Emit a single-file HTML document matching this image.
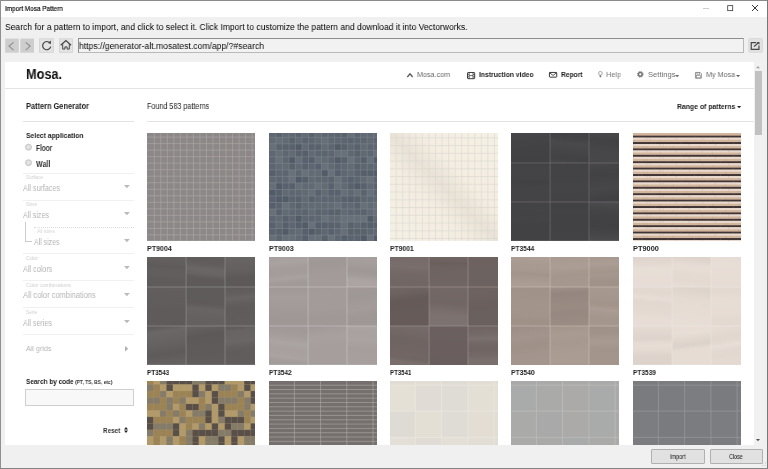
<!DOCTYPE html>
<html><head><meta charset="utf-8"><title>Import Mosa Pattern</title>
<style>
html,body{margin:0;padding:0}
body{width:768px;height:469px;position:relative;overflow:hidden;background:#f0f0f0;font-family:"Liberation Sans",sans-serif}
.a{position:absolute}
.t{position:absolute;white-space:nowrap;line-height:1;transform-origin:0 0;display:block;will-change:transform}
.hr{position:absolute;height:1px;background:#e4e4e4}
.hl{position:absolute;height:1px;background:#f0f0f0}
.btn{position:absolute;box-sizing:border-box;border:1px solid #b0b0b0;border-radius:1px;background:#e1e1e1}
.nb{position:absolute;box-sizing:border-box;width:13.8px;height:14.1px;top:38.5px;border:1px solid #d4d4d4;background:#e3e3e3}
.tri{position:absolute;width:0;height:0;border-left:2.9px solid transparent;border-right:2.9px solid transparent;border-top:3.2px solid #b9b9b9}
.car{position:absolute;width:0;height:0;border-left:1.9px solid transparent;border-right:1.9px solid transparent;border-top:2.2px solid #777}
.tile{position:absolute;width:108px;height:107.9px;overflow:hidden}
svg{position:absolute;overflow:visible}
</style></head><body>
<!-- window frame -->
<div class="a" style="left:0;top:0;width:768px;height:16.5px;background:#fff"></div>
<div class="a" style="left:0;top:0;width:768px;height:1px;background:#8a8a8a"></div>
<div class="a" style="left:0;top:0;width:1px;height:469px;background:#909090"></div>
<div class="a" style="left:767px;top:0;width:1px;height:469px;background:#777"></div>
<div class="a" style="left:0;top:468px;width:768px;height:1px;background:#858585"></div>
<!-- title buttons -->
<div class="a" style="left:703px;top:8px;width:6px;height:1px;background:#cfcfcf"></div>
<svg style="left:727px;top:5px" width="7" height="7" viewBox="0 0 7 7"><rect x=".7" y=".65" width="5" height="5" fill="none" stroke="#3a3a3a" stroke-width=".8"/></svg>
<svg style="left:752px;top:5px" width="6" height="6" viewBox="0 0 6 6"><path d="M0 0L6 6M6 0L0 6" stroke="#222" stroke-width="0.9" fill="none"/></svg>
<!-- nav buttons -->
<svg style="left:0;top:0" width="768" height="60" viewBox="0 0 768 60">
<rect x="5.2" y="38.6" width="13.6" height="14.1" fill="#cecece"/>
<rect x="20.3" y="38.6" width="13.7" height="14.1" fill="#cecece"/>
<rect x="39.6" y="38.8" width="13.7" height="13.5" fill="#e3e3e3" stroke="#d2d2d2" stroke-width=".8"/>
<rect x="59.5" y="38.8" width="13" height="13.5" fill="#e3e3e3" stroke="#d2d2d2" stroke-width=".8"/>
<rect x="748.8" y="38.6" width="13.6" height="13.7" rx="1.2" fill="#e2e2e2" stroke="#d4d4d4" stroke-width=".8"/>
</svg>
<svg style="left:5.17px;top:38.65px" width="14" height="14" viewBox="0 0 14 14"><path d="M8.6 3.3L4 7.1L8.6 11.2" stroke="#8e8e8e" stroke-width="1.1" fill="none"/></svg>
<svg style="left:20.3px;top:38.65px" width="14" height="14" viewBox="0 0 14 14"><path d="M5.7 3.3L10.1 7.1L5.7 11.2" stroke="#8e8e8e" stroke-width="1.1" fill="none"/></svg>
<svg style="left:39.9px;top:38.4px" width="14" height="14" viewBox="0 0 14 14"><path d="M10.72 8.69A4.1 4.1 0 1 1 8.81 4.08" stroke="#444" stroke-width="1.2" fill="none"/><path d="M7.7 4.9L10.86 2.5L11 5.9Z" fill="#444"/></svg>
<svg style="left:59.2px;top:38.4px" width="14" height="14" viewBox="0 0 14 14"><path d="M1.7 7.3L6.9 2.6L12.1 7.3" stroke="#444" stroke-width="1.3" fill="none"/><path d="M3.7 6.3V11.1H5.9V8.9H8.1V11.1H10.3V6.3" stroke="#444" stroke-width="1" fill="none"/></svg>
<!-- url field -->
<div class="a" style="left:77.5px;top:38.2px;width:666.2px;height:15px;box-sizing:border-box;border:1px solid #b9b9b9;border-top-color:#8e8e8e;border-left-color:#8e8e8e;background:#f2f2f2"></div>
<svg style="left:748.4px;top:38.2px" width="14.3" height="14.4" viewBox="0 0 14.3 14.4"><path d="M8.2 4.55H3.25V11.45H10.95V7.6" stroke="#484848" stroke-width="1.2" fill="none"/><path d="M6 8.5L10.8 4.5" stroke="#484848" stroke-width="1.1" fill="none"/><path d="M8.6 3.9H11.5V6.8Z" fill="#484848"/></svg>
<!-- web view -->
<div class="a" style="left:5px;top:62px;width:758px;height:383px;background:#fff;overflow:hidden"></div>
<!-- scrollbar -->
<div class="a" style="left:754px;top:62px;width:9px;height:383px;background:#f1f1f1"></div>
<div class="a" style="left:755.3px;top:71px;width:6.4px;height:63.5px;background:#c1c1c1"></div>
<svg style="left:756.4px;top:65.6px" width="4" height="2.2" viewBox="0 0 4 2.2"><path d="M0 2.2H4L2 0Z" fill="#a3a3a3"/></svg>
<svg style="left:756.4px;top:439.4px" width="4" height="2.2" viewBox="0 0 4 2.2"><path d="M0 0H4L2 2.2Z" fill="#505050"/></svg>
<!-- page lines -->
<div class="hr" style="left:5px;top:88.2px;width:749px"></div>
<div class="hr" style="left:23px;top:120.9px;width:110.5px"></div>
<div class="hr" style="left:147px;top:120.9px;width:607px"></div>
<div class="hl" style="left:23px;top:173.2px;width:110.5px"></div>
<div class="hl" style="left:23px;top:200.2px;width:110.5px"></div>
<div class="a" style="left:34px;top:226.7px;width:99.5px;height:0;border-top:1px dotted #dcdcdc"></div>
<div class="hl" style="left:23px;top:253.2px;width:110.5px"></div>
<div class="hl" style="left:23px;top:280.3px;width:110.5px"></div>
<div class="hl" style="left:23px;top:307.1px;width:110.5px"></div>
<div class="hl" style="left:23px;top:334.1px;width:110.5px"></div>
<!-- radios -->
<svg style="left:24px;top:142px" width="10" height="26" viewBox="0 0 10 26"><defs><radialGradient id="rg" cx=".5" cy=".45" r=".6"><stop offset="0" stop-color="#e9e9e9"/><stop offset="1" stop-color="#d6d6d6"/></radialGradient></defs><circle cx="4.5" cy="5.2" r="3" fill="url(#rg)" stroke="#b9b9b9" stroke-width=".7"/><circle cx="4.5" cy="20.7" r="3" fill="url(#rg)" stroke="#b9b9b9" stroke-width=".7"/></svg>
<!-- dropdown triangles -->
<svg style="left:123.9px;top:185.2px" width="5.8" height="3.2" viewBox="0 0 5.8 3.2"><path d="M0 0H5.8L2.9 3.2Z" fill="#b9b9b9"/></svg>
<svg style="left:123.9px;top:212.0px" width="5.8" height="3.2" viewBox="0 0 5.8 3.2"><path d="M0 0H5.8L2.9 3.2Z" fill="#b9b9b9"/></svg>
<svg style="left:123.9px;top:239.0px" width="5.8" height="3.2" viewBox="0 0 5.8 3.2"><path d="M0 0H5.8L2.9 3.2Z" fill="#b9b9b9"/></svg>
<svg style="left:123.9px;top:265.8px" width="5.8" height="3.2" viewBox="0 0 5.8 3.2"><path d="M0 0H5.8L2.9 3.2Z" fill="#b9b9b9"/></svg>
<svg style="left:123.9px;top:292.6px" width="5.8" height="3.2" viewBox="0 0 5.8 3.2"><path d="M0 0H5.8L2.9 3.2Z" fill="#b9b9b9"/></svg>
<svg style="left:123.9px;top:319.5px" width="5.8" height="3.2" viewBox="0 0 5.8 3.2"><path d="M0 0H5.8L2.9 3.2Z" fill="#b9b9b9"/></svg>
<svg style="left:125px;top:345.7px" width="3.3" height="5.4" viewBox="0 0 3.3 5.4"><path d="M0 0L3.3 2.7L0 5.4Z" fill="#b0b0b0"/></svg>
<!-- size connector -->
<div class="a" style="left:25.2px;top:222.3px;width:6.8px;height:19.7px;box-sizing:border-box;border-left:1px solid #cbcbcb;border-bottom:1px solid #cbcbcb"></div>
<!-- search input -->
<div class="a" style="left:25px;top:388.6px;width:108.8px;height:17px;box-sizing:border-box;border:1px solid #cfcfcf;background:#f8f8f8"></div>
<!-- reset icon -->
<svg style="left:124px;top:427.4px" width="4" height="6" viewBox="0 0 4 6"><path d="M0 2.5L2 0L4 2.5ZM0 3.5L2 6L4 3.5Z" fill="#222"/></svg>
<!-- header icons -->
<svg style="left:407.2px;top:73px" width="6" height="4.4" viewBox="0 0 6 4.4"><path d="M0.3 4L3 0.9L5.7 4" stroke="#5a5a5a" stroke-width="1.35" fill="none"/></svg>
<svg style="left:466.6px;top:71.5px" width="8.2" height="7.2" viewBox="0 0 8.2 7.2"><rect x=".5" y=".5" width="7.2" height="6.2" rx=".6" fill="none" stroke="#2a2a2a" stroke-width=".9"/><path d="M2.2 .5V6.7M6 .5V6.7M2.2 3.6H6M.5 2.4H2.2M.5 4.8H2.2M6 2.4H7.7M6 4.8H7.7" stroke="#2a2a2a" stroke-width=".65" fill="none"/></svg>
<svg style="left:549px;top:72.4px" width="8.2" height="5.6" viewBox="0 0 8.2 5.6"><rect x=".45" y=".45" width="7.3" height="4.7" rx=".5" fill="none" stroke="#222" stroke-width=".9"/><path d="M.6 .8L4.1 3.4L7.6 .8" stroke="#222" stroke-width=".8" fill="none"/></svg>
<svg style="left:598.3px;top:71.1px" width="4.8" height="6.8" viewBox="0 0 4.8 6.8"><circle cx="2.4" cy="2.3" r="1.85" fill="none" stroke="#8a8a8a" stroke-width=".75"/><path d="M1.6 4.3H3.2V5.9L2.4 6.5L1.6 5.9Z" fill="#777"/></svg>
<svg style="left:637.4px;top:71.1px" width="6.6" height="6.6" viewBox="0 0 6.6 6.6"><circle cx="3.3" cy="3.3" r="1.9" fill="none" stroke="#747474" stroke-width="1.5"/><circle cx="3.3" cy="3.3" r="2.9" fill="none" stroke="#747474" stroke-width=".9" stroke-dasharray="1.14 1.14"/></svg>
<svg style="left:695.2px;top:71.6px" width="6.8" height="6.6" viewBox="0 0 6.8 6.6"><path d="M.45 .45H5.2L6.35 1.6V6.15H.45Z" fill="none" stroke="#7a7a7a" stroke-width=".8"/><path d="M1.9 .5V2.3H4.6V.5" fill="none" stroke="#7a7a7a" stroke-width=".7"/><rect x="1.6" y="3.7" width="3.6" height="2.3" fill="none" stroke="#7a7a7a" stroke-width=".6"/></svg>
<svg style="left:675px;top:74.6px" width="4.2" height="2.3" viewBox="0 0 4.2 2.3"><path d="M0 0H4.2L2.1 2.3Z" fill="#6a6a6a"/></svg>
<svg style="left:736.2px;top:74.6px" width="4.2" height="2.3" viewBox="0 0 4.2 2.3"><path d="M0 0H4.2L2.1 2.3Z" fill="#6a6a6a"/></svg>
<svg style="left:736.8px;top:105.6px" width="4.2" height="2.3" viewBox="0 0 4.2 2.3"><path d="M0 0H4.2L2.1 2.3Z" fill="#222"/></svg>
<!-- bottom buttons -->
<div class="btn" style="left:651.3px;top:449.3px;width:53.4px;height:14.4px"></div>
<div class="btn" style="left:709.7px;top:449.3px;width:53.3px;height:14.4px"></div>
<!-- resize grip -->
<svg style="left:761.3px;top:461.2px" width="5.6" height="5.6" viewBox="0 0 7 7"><g fill="#c4c4c4"><rect x="5" y="1" width="1" height="1"/><rect x="5" y="3" width="1" height="1"/><rect x="3" y="3" width="1" height="1"/><rect x="5" y="5" width="1" height="1"/><rect x="3" y="5" width="1" height="1"/><rect x="1" y="5" width="1" height="1"/></g></svg>
<div class="a" style="left:5px;top:62px;width:749px;height:383px;overflow:hidden"><div class="tile" style="left:142.2px;top:71.0px"><svg width="108" height="107.9" viewBox="0 0 108 107.9" style="left:0;top:0"><rect width="108" height="107.9" fill="#8c8887"/><path d="M7.30 0V107.9M13.82 0V107.9M20.34 0V107.9M26.86 0V107.9M33.38 0V107.9M39.90 0V107.9M46.42 0V107.9M52.94 0V107.9M59.46 0V107.9M65.98 0V107.9M72.50 0V107.9M79.02 0V107.9M85.54 0V107.9M92.06 0V107.9M98.58 0V107.9M105.10 0V107.9M0 4.10H108M0 10.62H108M0 17.14H108M0 23.66H108M0 30.18H108M0 36.70H108M0 43.22H108M0 49.74H108M0 56.26H108M0 62.78H108M0 69.30H108M0 75.82H108M0 82.34H108M0 88.86H108M0 95.38H108M0 101.90H108" stroke="#b4b0af" stroke-width="0.5" fill="none" opacity="1"/></svg></div><div class="tile" style="left:263.6px;top:71.0px"><svg width="108" height="107.9" viewBox="0 0 108 107.9" style="left:0;top:0"><rect width="108" height="107.9" fill="#5d6670"/><rect x="0.38" y="-2.22" width="6.52" height="6.52" fill="#5e6771"/><rect x="6.90" y="-2.22" width="6.52" height="6.52" fill="#58616d"/><rect x="13.42" y="-2.22" width="6.52" height="6.52" fill="#616973"/><rect x="19.94" y="-2.22" width="6.52" height="6.52" fill="#5f6872"/><rect x="26.46" y="-2.22" width="6.52" height="6.52" fill="#5a636e"/><rect x="32.98" y="-2.22" width="6.52" height="6.52" fill="#626a74"/><rect x="39.50" y="-2.22" width="6.52" height="6.52" fill="#59616b"/><rect x="46.02" y="-2.22" width="6.52" height="6.52" fill="#626a74"/><rect x="52.54" y="-2.22" width="6.52" height="6.52" fill="#5e6771"/><rect x="59.06" y="-2.22" width="6.52" height="6.52" fill="#5d6670"/><rect x="65.58" y="-2.22" width="6.52" height="6.52" fill="#5a636e"/><rect x="72.10" y="-2.22" width="6.52" height="6.52" fill="#59616b"/><rect x="78.62" y="-2.22" width="6.52" height="6.52" fill="#666e77"/><rect x="85.14" y="-2.22" width="6.52" height="6.52" fill="#5a636e"/><rect x="91.66" y="-2.22" width="6.52" height="6.52" fill="#626a74"/><rect x="98.18" y="-2.22" width="6.52" height="6.52" fill="#616973"/><rect x="104.70" y="-2.22" width="6.52" height="6.52" fill="#616973"/><rect x="0.38" y="4.30" width="6.52" height="6.52" fill="#626a74"/><rect x="6.90" y="4.30" width="6.52" height="6.52" fill="#666e77"/><rect x="13.42" y="4.30" width="6.52" height="6.52" fill="#626a74"/><rect x="19.94" y="4.30" width="6.52" height="6.52" fill="#59616b"/><rect x="26.46" y="4.30" width="6.52" height="6.52" fill="#616973"/><rect x="32.98" y="4.30" width="6.52" height="6.52" fill="#5a636e"/><rect x="39.50" y="4.30" width="6.52" height="6.52" fill="#5d6670"/><rect x="46.02" y="4.30" width="6.52" height="6.52" fill="#626a74"/><rect x="52.54" y="4.30" width="6.52" height="6.52" fill="#666e77"/><rect x="59.06" y="4.30" width="6.52" height="6.52" fill="#5f6872"/><rect x="65.58" y="4.30" width="6.52" height="6.52" fill="#5f6872"/><rect x="72.10" y="4.30" width="6.52" height="6.52" fill="#5d6670"/><rect x="78.62" y="4.30" width="6.52" height="6.52" fill="#5a636e"/><rect x="85.14" y="4.30" width="6.52" height="6.52" fill="#5d6670"/><rect x="91.66" y="4.30" width="6.52" height="6.52" fill="#5d6670"/><rect x="98.18" y="4.30" width="6.52" height="6.52" fill="#616973"/><rect x="104.70" y="4.30" width="6.52" height="6.52" fill="#5a636e"/><rect x="0.38" y="10.82" width="6.52" height="6.52" fill="#666e77"/><rect x="6.90" y="10.82" width="6.52" height="6.52" fill="#5a636e"/><rect x="13.42" y="10.82" width="6.52" height="6.52" fill="#59616b"/><rect x="19.94" y="10.82" width="6.52" height="6.52" fill="#58616d"/><rect x="26.46" y="10.82" width="6.52" height="6.52" fill="#525b68"/><rect x="32.98" y="10.82" width="6.52" height="6.52" fill="#616973"/><rect x="39.50" y="10.82" width="6.52" height="6.52" fill="#58616d"/><rect x="46.02" y="10.82" width="6.52" height="6.52" fill="#59616b"/><rect x="52.54" y="10.82" width="6.52" height="6.52" fill="#626a74"/><rect x="59.06" y="10.82" width="6.52" height="6.52" fill="#5d6670"/><rect x="65.58" y="10.82" width="6.52" height="6.52" fill="#525b68"/><rect x="72.10" y="10.82" width="6.52" height="6.52" fill="#59616b"/><rect x="78.62" y="10.82" width="6.52" height="6.52" fill="#5f6872"/><rect x="85.14" y="10.82" width="6.52" height="6.52" fill="#58616d"/><rect x="91.66" y="10.82" width="6.52" height="6.52" fill="#626a74"/><rect x="98.18" y="10.82" width="6.52" height="6.52" fill="#5d6670"/><rect x="104.70" y="10.82" width="6.52" height="6.52" fill="#5d6670"/><rect x="0.38" y="17.34" width="6.52" height="6.52" fill="#5f6872"/><rect x="6.90" y="17.34" width="6.52" height="6.52" fill="#666e77"/><rect x="13.42" y="17.34" width="6.52" height="6.52" fill="#5e6771"/><rect x="19.94" y="17.34" width="6.52" height="6.52" fill="#626a74"/><rect x="26.46" y="17.34" width="6.52" height="6.52" fill="#59616b"/><rect x="32.98" y="17.34" width="6.52" height="6.52" fill="#565f6c"/><rect x="39.50" y="17.34" width="6.52" height="6.52" fill="#626a74"/><rect x="46.02" y="17.34" width="6.52" height="6.52" fill="#5d6670"/><rect x="52.54" y="17.34" width="6.52" height="6.52" fill="#5a636e"/><rect x="59.06" y="17.34" width="6.52" height="6.52" fill="#5d6670"/><rect x="65.58" y="17.34" width="6.52" height="6.52" fill="#666e77"/><rect x="72.10" y="17.34" width="6.52" height="6.52" fill="#687079"/><rect x="78.62" y="17.34" width="6.52" height="6.52" fill="#5f6872"/><rect x="85.14" y="17.34" width="6.52" height="6.52" fill="#59616b"/><rect x="91.66" y="17.34" width="6.52" height="6.52" fill="#616973"/><rect x="98.18" y="17.34" width="6.52" height="6.52" fill="#5e6771"/><rect x="104.70" y="17.34" width="6.52" height="6.52" fill="#687079"/><rect x="0.38" y="23.86" width="6.52" height="6.52" fill="#5d6670"/><rect x="6.90" y="23.86" width="6.52" height="6.52" fill="#687079"/><rect x="13.42" y="23.86" width="6.52" height="6.52" fill="#5e6771"/><rect x="19.94" y="23.86" width="6.52" height="6.52" fill="#525b68"/><rect x="26.46" y="23.86" width="6.52" height="6.52" fill="#666e77"/><rect x="32.98" y="23.86" width="6.52" height="6.52" fill="#58616d"/><rect x="39.50" y="23.86" width="6.52" height="6.52" fill="#565f6c"/><rect x="46.02" y="23.86" width="6.52" height="6.52" fill="#666e77"/><rect x="52.54" y="23.86" width="6.52" height="6.52" fill="#626a74"/><rect x="59.06" y="23.86" width="6.52" height="6.52" fill="#5d6670"/><rect x="65.58" y="23.86" width="6.52" height="6.52" fill="#525b68"/><rect x="72.10" y="23.86" width="6.52" height="6.52" fill="#59616b"/><rect x="78.62" y="23.86" width="6.52" height="6.52" fill="#687079"/><rect x="85.14" y="23.86" width="6.52" height="6.52" fill="#5e6771"/><rect x="91.66" y="23.86" width="6.52" height="6.52" fill="#565f6c"/><rect x="98.18" y="23.86" width="6.52" height="6.52" fill="#687079"/><rect x="104.70" y="23.86" width="6.52" height="6.52" fill="#525b68"/><rect x="0.38" y="30.38" width="6.52" height="6.52" fill="#5d6670"/><rect x="6.90" y="30.38" width="6.52" height="6.52" fill="#626a74"/><rect x="13.42" y="30.38" width="6.52" height="6.52" fill="#626a74"/><rect x="19.94" y="30.38" width="6.52" height="6.52" fill="#59616b"/><rect x="26.46" y="30.38" width="6.52" height="6.52" fill="#616973"/><rect x="32.98" y="30.38" width="6.52" height="6.52" fill="#58616d"/><rect x="39.50" y="30.38" width="6.52" height="6.52" fill="#5e6771"/><rect x="46.02" y="30.38" width="6.52" height="6.52" fill="#58616d"/><rect x="52.54" y="30.38" width="6.52" height="6.52" fill="#687079"/><rect x="59.06" y="30.38" width="6.52" height="6.52" fill="#616973"/><rect x="65.58" y="30.38" width="6.52" height="6.52" fill="#5a636e"/><rect x="72.10" y="30.38" width="6.52" height="6.52" fill="#5f6872"/><rect x="78.62" y="30.38" width="6.52" height="6.52" fill="#626a74"/><rect x="85.14" y="30.38" width="6.52" height="6.52" fill="#59616b"/><rect x="91.66" y="30.38" width="6.52" height="6.52" fill="#5d6670"/><rect x="98.18" y="30.38" width="6.52" height="6.52" fill="#5e6771"/><rect x="104.70" y="30.38" width="6.52" height="6.52" fill="#5e6771"/><rect x="0.38" y="36.90" width="6.52" height="6.52" fill="#565f6c"/><rect x="6.90" y="36.90" width="6.52" height="6.52" fill="#5e6771"/><rect x="13.42" y="36.90" width="6.52" height="6.52" fill="#5d6670"/><rect x="19.94" y="36.90" width="6.52" height="6.52" fill="#687079"/><rect x="26.46" y="36.90" width="6.52" height="6.52" fill="#5d6670"/><rect x="32.98" y="36.90" width="6.52" height="6.52" fill="#687079"/><rect x="39.50" y="36.90" width="6.52" height="6.52" fill="#626a74"/><rect x="46.02" y="36.90" width="6.52" height="6.52" fill="#626a74"/><rect x="52.54" y="36.90" width="6.52" height="6.52" fill="#525b68"/><rect x="59.06" y="36.90" width="6.52" height="6.52" fill="#687079"/><rect x="65.58" y="36.90" width="6.52" height="6.52" fill="#565f6c"/><rect x="72.10" y="36.90" width="6.52" height="6.52" fill="#5f6872"/><rect x="78.62" y="36.90" width="6.52" height="6.52" fill="#626a74"/><rect x="85.14" y="36.90" width="6.52" height="6.52" fill="#5a636e"/><rect x="91.66" y="36.90" width="6.52" height="6.52" fill="#565f6c"/><rect x="98.18" y="36.90" width="6.52" height="6.52" fill="#565f6c"/><rect x="104.70" y="36.90" width="6.52" height="6.52" fill="#525b68"/><rect x="0.38" y="43.42" width="6.52" height="6.52" fill="#5f6872"/><rect x="6.90" y="43.42" width="6.52" height="6.52" fill="#5d6670"/><rect x="13.42" y="43.42" width="6.52" height="6.52" fill="#5f6872"/><rect x="19.94" y="43.42" width="6.52" height="6.52" fill="#687079"/><rect x="26.46" y="43.42" width="6.52" height="6.52" fill="#525b68"/><rect x="32.98" y="43.42" width="6.52" height="6.52" fill="#565f6c"/><rect x="39.50" y="43.42" width="6.52" height="6.52" fill="#616973"/><rect x="46.02" y="43.42" width="6.52" height="6.52" fill="#5f6872"/><rect x="52.54" y="43.42" width="6.52" height="6.52" fill="#5e6771"/><rect x="59.06" y="43.42" width="6.52" height="6.52" fill="#5a636e"/><rect x="65.58" y="43.42" width="6.52" height="6.52" fill="#687079"/><rect x="72.10" y="43.42" width="6.52" height="6.52" fill="#5e6771"/><rect x="78.62" y="43.42" width="6.52" height="6.52" fill="#58616d"/><rect x="85.14" y="43.42" width="6.52" height="6.52" fill="#5d6670"/><rect x="91.66" y="43.42" width="6.52" height="6.52" fill="#626a74"/><rect x="98.18" y="43.42" width="6.52" height="6.52" fill="#687079"/><rect x="104.70" y="43.42" width="6.52" height="6.52" fill="#5a636e"/><rect x="0.38" y="49.94" width="6.52" height="6.52" fill="#666e77"/><rect x="6.90" y="49.94" width="6.52" height="6.52" fill="#525b68"/><rect x="13.42" y="49.94" width="6.52" height="6.52" fill="#58616d"/><rect x="19.94" y="49.94" width="6.52" height="6.52" fill="#565f6c"/><rect x="26.46" y="49.94" width="6.52" height="6.52" fill="#666e77"/><rect x="32.98" y="49.94" width="6.52" height="6.52" fill="#616973"/><rect x="39.50" y="49.94" width="6.52" height="6.52" fill="#616973"/><rect x="46.02" y="49.94" width="6.52" height="6.52" fill="#687079"/><rect x="52.54" y="49.94" width="6.52" height="6.52" fill="#626a74"/><rect x="59.06" y="49.94" width="6.52" height="6.52" fill="#58616d"/><rect x="65.58" y="49.94" width="6.52" height="6.52" fill="#687079"/><rect x="72.10" y="49.94" width="6.52" height="6.52" fill="#616973"/><rect x="78.62" y="49.94" width="6.52" height="6.52" fill="#59616b"/><rect x="85.14" y="49.94" width="6.52" height="6.52" fill="#525b68"/><rect x="91.66" y="49.94" width="6.52" height="6.52" fill="#58616d"/><rect x="98.18" y="49.94" width="6.52" height="6.52" fill="#616973"/><rect x="104.70" y="49.94" width="6.52" height="6.52" fill="#59616b"/><rect x="0.38" y="56.46" width="6.52" height="6.52" fill="#525b68"/><rect x="6.90" y="56.46" width="6.52" height="6.52" fill="#565f6c"/><rect x="13.42" y="56.46" width="6.52" height="6.52" fill="#616973"/><rect x="19.94" y="56.46" width="6.52" height="6.52" fill="#5e6771"/><rect x="26.46" y="56.46" width="6.52" height="6.52" fill="#5f6872"/><rect x="32.98" y="56.46" width="6.52" height="6.52" fill="#616973"/><rect x="39.50" y="56.46" width="6.52" height="6.52" fill="#666e77"/><rect x="46.02" y="56.46" width="6.52" height="6.52" fill="#58616d"/><rect x="52.54" y="56.46" width="6.52" height="6.52" fill="#626a74"/><rect x="59.06" y="56.46" width="6.52" height="6.52" fill="#58616d"/><rect x="65.58" y="56.46" width="6.52" height="6.52" fill="#58616d"/><rect x="72.10" y="56.46" width="6.52" height="6.52" fill="#666e77"/><rect x="78.62" y="56.46" width="6.52" height="6.52" fill="#5f6872"/><rect x="85.14" y="56.46" width="6.52" height="6.52" fill="#666e77"/><rect x="91.66" y="56.46" width="6.52" height="6.52" fill="#5a636e"/><rect x="98.18" y="56.46" width="6.52" height="6.52" fill="#687079"/><rect x="104.70" y="56.46" width="6.52" height="6.52" fill="#5d6670"/><rect x="0.38" y="62.98" width="6.52" height="6.52" fill="#58616d"/><rect x="6.90" y="62.98" width="6.52" height="6.52" fill="#525b68"/><rect x="13.42" y="62.98" width="6.52" height="6.52" fill="#525b68"/><rect x="19.94" y="62.98" width="6.52" height="6.52" fill="#5a636e"/><rect x="26.46" y="62.98" width="6.52" height="6.52" fill="#58616d"/><rect x="32.98" y="62.98" width="6.52" height="6.52" fill="#616973"/><rect x="39.50" y="62.98" width="6.52" height="6.52" fill="#59616b"/><rect x="46.02" y="62.98" width="6.52" height="6.52" fill="#5e6771"/><rect x="52.54" y="62.98" width="6.52" height="6.52" fill="#5d6670"/><rect x="59.06" y="62.98" width="6.52" height="6.52" fill="#5d6670"/><rect x="65.58" y="62.98" width="6.52" height="6.52" fill="#5e6771"/><rect x="72.10" y="62.98" width="6.52" height="6.52" fill="#58616d"/><rect x="78.62" y="62.98" width="6.52" height="6.52" fill="#565f6c"/><rect x="85.14" y="62.98" width="6.52" height="6.52" fill="#59616b"/><rect x="91.66" y="62.98" width="6.52" height="6.52" fill="#5d6670"/><rect x="98.18" y="62.98" width="6.52" height="6.52" fill="#5f6872"/><rect x="104.70" y="62.98" width="6.52" height="6.52" fill="#5f6872"/><rect x="0.38" y="69.50" width="6.52" height="6.52" fill="#565f6c"/><rect x="6.90" y="69.50" width="6.52" height="6.52" fill="#5a636e"/><rect x="13.42" y="69.50" width="6.52" height="6.52" fill="#687079"/><rect x="19.94" y="69.50" width="6.52" height="6.52" fill="#5f6872"/><rect x="26.46" y="69.50" width="6.52" height="6.52" fill="#59616b"/><rect x="32.98" y="69.50" width="6.52" height="6.52" fill="#616973"/><rect x="39.50" y="69.50" width="6.52" height="6.52" fill="#616973"/><rect x="46.02" y="69.50" width="6.52" height="6.52" fill="#616973"/><rect x="52.54" y="69.50" width="6.52" height="6.52" fill="#616973"/><rect x="59.06" y="69.50" width="6.52" height="6.52" fill="#626a74"/><rect x="65.58" y="69.50" width="6.52" height="6.52" fill="#687079"/><rect x="72.10" y="69.50" width="6.52" height="6.52" fill="#5f6872"/><rect x="78.62" y="69.50" width="6.52" height="6.52" fill="#616973"/><rect x="85.14" y="69.50" width="6.52" height="6.52" fill="#5a636e"/><rect x="91.66" y="69.50" width="6.52" height="6.52" fill="#666e77"/><rect x="98.18" y="69.50" width="6.52" height="6.52" fill="#626a74"/><rect x="104.70" y="69.50" width="6.52" height="6.52" fill="#666e77"/><rect x="0.38" y="76.02" width="6.52" height="6.52" fill="#687079"/><rect x="6.90" y="76.02" width="6.52" height="6.52" fill="#58616d"/><rect x="13.42" y="76.02" width="6.52" height="6.52" fill="#626a74"/><rect x="19.94" y="76.02" width="6.52" height="6.52" fill="#5e6771"/><rect x="26.46" y="76.02" width="6.52" height="6.52" fill="#5d6670"/><rect x="32.98" y="76.02" width="6.52" height="6.52" fill="#5a636e"/><rect x="39.50" y="76.02" width="6.52" height="6.52" fill="#626a74"/><rect x="46.02" y="76.02" width="6.52" height="6.52" fill="#5a636e"/><rect x="52.54" y="76.02" width="6.52" height="6.52" fill="#5d6670"/><rect x="59.06" y="76.02" width="6.52" height="6.52" fill="#58616d"/><rect x="65.58" y="76.02" width="6.52" height="6.52" fill="#59616b"/><rect x="72.10" y="76.02" width="6.52" height="6.52" fill="#626a74"/><rect x="78.62" y="76.02" width="6.52" height="6.52" fill="#5e6771"/><rect x="85.14" y="76.02" width="6.52" height="6.52" fill="#5d6670"/><rect x="91.66" y="76.02" width="6.52" height="6.52" fill="#5a636e"/><rect x="98.18" y="76.02" width="6.52" height="6.52" fill="#626a74"/><rect x="104.70" y="76.02" width="6.52" height="6.52" fill="#666e77"/><rect x="0.38" y="82.54" width="6.52" height="6.52" fill="#5d6670"/><rect x="6.90" y="82.54" width="6.52" height="6.52" fill="#616973"/><rect x="13.42" y="82.54" width="6.52" height="6.52" fill="#58616d"/><rect x="19.94" y="82.54" width="6.52" height="6.52" fill="#5f6872"/><rect x="26.46" y="82.54" width="6.52" height="6.52" fill="#525b68"/><rect x="32.98" y="82.54" width="6.52" height="6.52" fill="#5e6771"/><rect x="39.50" y="82.54" width="6.52" height="6.52" fill="#5d6670"/><rect x="46.02" y="82.54" width="6.52" height="6.52" fill="#5e6771"/><rect x="52.54" y="82.54" width="6.52" height="6.52" fill="#687079"/><rect x="59.06" y="82.54" width="6.52" height="6.52" fill="#626a74"/><rect x="65.58" y="82.54" width="6.52" height="6.52" fill="#626a74"/><rect x="72.10" y="82.54" width="6.52" height="6.52" fill="#687079"/><rect x="78.62" y="82.54" width="6.52" height="6.52" fill="#687079"/><rect x="85.14" y="82.54" width="6.52" height="6.52" fill="#687079"/><rect x="91.66" y="82.54" width="6.52" height="6.52" fill="#687079"/><rect x="98.18" y="82.54" width="6.52" height="6.52" fill="#525b68"/><rect x="104.70" y="82.54" width="6.52" height="6.52" fill="#626a74"/><rect x="0.38" y="89.06" width="6.52" height="6.52" fill="#58616d"/><rect x="6.90" y="89.06" width="6.52" height="6.52" fill="#626a74"/><rect x="13.42" y="89.06" width="6.52" height="6.52" fill="#565f6c"/><rect x="19.94" y="89.06" width="6.52" height="6.52" fill="#5e6771"/><rect x="26.46" y="89.06" width="6.52" height="6.52" fill="#565f6c"/><rect x="32.98" y="89.06" width="6.52" height="6.52" fill="#525b68"/><rect x="39.50" y="89.06" width="6.52" height="6.52" fill="#687079"/><rect x="46.02" y="89.06" width="6.52" height="6.52" fill="#565f6c"/><rect x="52.54" y="89.06" width="6.52" height="6.52" fill="#58616d"/><rect x="59.06" y="89.06" width="6.52" height="6.52" fill="#59616b"/><rect x="65.58" y="89.06" width="6.52" height="6.52" fill="#5a636e"/><rect x="72.10" y="89.06" width="6.52" height="6.52" fill="#666e77"/><rect x="78.62" y="89.06" width="6.52" height="6.52" fill="#59616b"/><rect x="85.14" y="89.06" width="6.52" height="6.52" fill="#5e6771"/><rect x="91.66" y="89.06" width="6.52" height="6.52" fill="#58616d"/><rect x="98.18" y="89.06" width="6.52" height="6.52" fill="#565f6c"/><rect x="104.70" y="89.06" width="6.52" height="6.52" fill="#59616b"/><rect x="0.38" y="95.58" width="6.52" height="6.52" fill="#5a636e"/><rect x="6.90" y="95.58" width="6.52" height="6.52" fill="#59616b"/><rect x="13.42" y="95.58" width="6.52" height="6.52" fill="#525b68"/><rect x="19.94" y="95.58" width="6.52" height="6.52" fill="#5f6872"/><rect x="26.46" y="95.58" width="6.52" height="6.52" fill="#626a74"/><rect x="32.98" y="95.58" width="6.52" height="6.52" fill="#565f6c"/><rect x="39.50" y="95.58" width="6.52" height="6.52" fill="#525b68"/><rect x="46.02" y="95.58" width="6.52" height="6.52" fill="#59616b"/><rect x="52.54" y="95.58" width="6.52" height="6.52" fill="#5e6771"/><rect x="59.06" y="95.58" width="6.52" height="6.52" fill="#58616d"/><rect x="65.58" y="95.58" width="6.52" height="6.52" fill="#5e6771"/><rect x="72.10" y="95.58" width="6.52" height="6.52" fill="#666e77"/><rect x="78.62" y="95.58" width="6.52" height="6.52" fill="#59616b"/><rect x="85.14" y="95.58" width="6.52" height="6.52" fill="#59616b"/><rect x="91.66" y="95.58" width="6.52" height="6.52" fill="#59616b"/><rect x="98.18" y="95.58" width="6.52" height="6.52" fill="#5e6771"/><rect x="104.70" y="95.58" width="6.52" height="6.52" fill="#5f6872"/><rect x="0.38" y="102.10" width="6.52" height="6.52" fill="#666e77"/><rect x="6.90" y="102.10" width="6.52" height="6.52" fill="#5d6670"/><rect x="13.42" y="102.10" width="6.52" height="6.52" fill="#666e77"/><rect x="19.94" y="102.10" width="6.52" height="6.52" fill="#666e77"/><rect x="26.46" y="102.10" width="6.52" height="6.52" fill="#616973"/><rect x="32.98" y="102.10" width="6.52" height="6.52" fill="#565f6c"/><rect x="39.50" y="102.10" width="6.52" height="6.52" fill="#666e77"/><rect x="46.02" y="102.10" width="6.52" height="6.52" fill="#666e77"/><rect x="52.54" y="102.10" width="6.52" height="6.52" fill="#59616b"/><rect x="59.06" y="102.10" width="6.52" height="6.52" fill="#687079"/><rect x="65.58" y="102.10" width="6.52" height="6.52" fill="#5e6771"/><rect x="72.10" y="102.10" width="6.52" height="6.52" fill="#565f6c"/><rect x="78.62" y="102.10" width="6.52" height="6.52" fill="#5a636e"/><rect x="85.14" y="102.10" width="6.52" height="6.52" fill="#5a636e"/><rect x="91.66" y="102.10" width="6.52" height="6.52" fill="#525b68"/><rect x="98.18" y="102.10" width="6.52" height="6.52" fill="#687079"/><rect x="104.70" y="102.10" width="6.52" height="6.52" fill="#525b68"/><path d="M6.90 0V107.9M13.42 0V107.9M19.94 0V107.9M26.46 0V107.9M32.98 0V107.9M39.50 0V107.9M46.02 0V107.9M52.54 0V107.9M59.06 0V107.9M65.58 0V107.9M72.10 0V107.9M78.62 0V107.9M85.14 0V107.9M91.66 0V107.9M98.18 0V107.9M104.70 0V107.9M0 4.30H108M0 10.82H108M0 17.34H108M0 23.86H108M0 30.38H108M0 36.90H108M0 43.42H108M0 49.94H108M0 56.46H108M0 62.98H108M0 69.50H108M0 76.02H108M0 82.54H108M0 89.06H108M0 95.58H108M0 102.10H108" stroke="#838a93" stroke-width="0.55" fill="none" opacity="0.9"/></svg></div><div class="tile" style="left:385.0px;top:71.0px"><svg width="108" height="107.9" viewBox="0 0 108 107.9" style="left:0;top:0"><defs><linearGradient id="g1" x1="1" y1="0" x2="0" y2="1"><stop offset="0" stop-color="#f5f0e4"/><stop offset=".36" stop-color="#f4eee2"/><stop offset=".5" stop-color="#e9e3d7"/><stop offset=".64" stop-color="#f3ede1"/><stop offset="1" stop-color="#f5f0e4"/></linearGradient></defs><rect width="108" height="107.9" fill="url(#g1)"/><path d="M6.20 0V107.9M12.75 0V107.9M19.30 0V107.9M25.85 0V107.9M32.40 0V107.9M38.95 0V107.9M45.50 0V107.9M52.05 0V107.9M58.60 0V107.9M65.15 0V107.9M71.70 0V107.9M78.25 0V107.9M84.80 0V107.9M91.35 0V107.9M97.90 0V107.9M104.45 0V107.9M0 4.80H108M0 12.55H108M0 20.30H108M0 28.05H108M0 35.80H108M0 43.55H108M0 51.30H108M0 59.05H108M0 66.80H108M0 74.55H108M0 82.30H108M0 90.05H108M0 97.80H108M0 105.55H108" stroke="#d6d2cb" stroke-width="0.55" fill="none" opacity="0.9"/></svg></div><div class="tile" style="left:506.3px;top:71.0px"><svg width="108" height="107.9" viewBox="0 0 108 107.9" style="left:0;top:0"><defs><linearGradient id="w55" x1="0.00" y1="0" x2="0.09" y2="1"><stop offset="0.00" stop-color="#fff" stop-opacity="0.019"/><stop offset="0.22" stop-color="#fff" stop-opacity="0.006"/><stop offset="0.51" stop-color="#000" stop-opacity="0.009"/><stop offset="0.67" stop-color="#000" stop-opacity="0.022"/><stop offset="1.00" stop-color="#000" stop-opacity="0.025"/></linearGradient><linearGradient id="w56" x1="0.12" y1="0" x2="0.00" y2="1"><stop offset="0.00" stop-color="#000" stop-opacity="0.018"/><stop offset="0.30" stop-color="#fff" stop-opacity="0.033"/><stop offset="0.54" stop-color="#fff" stop-opacity="0.014"/><stop offset="0.79" stop-color="#000" stop-opacity="0.012"/><stop offset="0.96" stop-color="#fff" stop-opacity="0.027"/></linearGradient><linearGradient id="w57" x1="0.12" y1="0" x2="0.00" y2="1"><stop offset="0.00" stop-color="#fff" stop-opacity="0.023"/><stop offset="0.20" stop-color="#000" stop-opacity="0.013"/><stop offset="0.56" stop-color="#fff" stop-opacity="0.020"/><stop offset="0.87" stop-color="#fff" stop-opacity="0.025"/></linearGradient><linearGradient id="w58" x1="0.02" y1="0" x2="0.00" y2="1"><stop offset="0.00" stop-color="#000" stop-opacity="0.016"/><stop offset="0.17" stop-color="#fff" stop-opacity="0.005"/><stop offset="0.49" stop-color="#000" stop-opacity="0.019"/><stop offset="0.73" stop-color="#fff" stop-opacity="0.005"/><stop offset="0.94" stop-color="#fff" stop-opacity="0.007"/></linearGradient><linearGradient id="w59" x1="0.00" y1="0" x2="0.04" y2="1"><stop offset="0.00" stop-color="#000" stop-opacity="0.010"/><stop offset="0.28" stop-color="#000" stop-opacity="0.003"/><stop offset="0.68" stop-color="#fff" stop-opacity="0.007"/><stop offset="0.98" stop-color="#000" stop-opacity="0.003"/></linearGradient><linearGradient id="w60" x1="0.00" y1="0" x2="0.09" y2="1"><stop offset="0.00" stop-color="#fff" stop-opacity="0.035"/><stop offset="0.32" stop-color="#000" stop-opacity="0.012"/><stop offset="0.68" stop-color="#fff" stop-opacity="0.020"/><stop offset="0.94" stop-color="#000" stop-opacity="0.025"/></linearGradient><linearGradient id="w61" x1="0.00" y1="0" x2="0.05" y2="1"><stop offset="0.00" stop-color="#000" stop-opacity="0.013"/><stop offset="0.35" stop-color="#fff" stop-opacity="0.001"/><stop offset="0.63" stop-color="#000" stop-opacity="0.016"/><stop offset="0.87" stop-color="#000" stop-opacity="0.014"/></linearGradient><linearGradient id="w62" x1="0.00" y1="0" x2="0.01" y2="1"><stop offset="0.00" stop-color="#000" stop-opacity="0.025"/><stop offset="0.26" stop-color="#000" stop-opacity="0.007"/><stop offset="0.52" stop-color="#000" stop-opacity="0.013"/><stop offset="0.85" stop-color="#000" stop-opacity="0.008"/></linearGradient><linearGradient id="w63" x1="0.05" y1="0" x2="0.00" y2="1"><stop offset="0.00" stop-color="#fff" stop-opacity="0.038"/><stop offset="0.38" stop-color="#000" stop-opacity="0.019"/><stop offset="0.60" stop-color="#000" stop-opacity="0.026"/><stop offset="0.93" stop-color="#fff" stop-opacity="0.037"/></linearGradient></defs><rect width="108" height="107.9" fill="#434245"/><rect x="0" y="0" width="39.1" height="30" fill="url(#w55)"/><rect x="39.1" y="0" width="38.9" height="30" fill="url(#w56)"/><rect x="78" y="0" width="30" height="30" fill="url(#w57)"/><rect x="0" y="30" width="39.1" height="39" fill="url(#w58)"/><rect x="39.1" y="30" width="38.9" height="39" fill="url(#w59)"/><rect x="78" y="30" width="30" height="39" fill="url(#w60)"/><rect x="0" y="69" width="39.1" height="38.900000000000006" fill="url(#w61)"/><rect x="39.1" y="69" width="38.9" height="38.900000000000006" fill="url(#w62)"/><rect x="78" y="69" width="30" height="38.900000000000006" fill="url(#w63)"/><path d="M39.10 0V107.9M78.00 0V107.9M0 30.00H108M0 69.00H108" stroke="#7c7b7f" stroke-width="0.55" fill="none" opacity="1"/></svg></div><div class="tile" style="left:627.8px;top:71.0px"><svg width="108" height="107.9" viewBox="0 0 108 107.9" style="left:0;top:0"><rect width="108" height="107.9" fill="#d3b59c"/><rect x="0" y="2.65" width="108" height="2.0" fill="#3f3536"/><rect x="0" y="4.65" width="108" height="2.1" fill="#e8dacf"/><rect x="0" y="9.05" width="108" height="2.0" fill="#3f3536"/><rect x="0" y="11.05" width="108" height="2.1" fill="#e8dacf"/><rect x="0" y="15.45" width="108" height="2.0" fill="#3f3536"/><rect x="0" y="17.45" width="108" height="2.1" fill="#e8dacf"/><rect x="0" y="21.85" width="108" height="2.0" fill="#3f3536"/><rect x="0" y="23.85" width="108" height="2.1" fill="#e8dacf"/><rect x="0" y="28.25" width="108" height="2.0" fill="#3f3536"/><rect x="0" y="30.25" width="108" height="2.1" fill="#e8dacf"/><rect x="0" y="34.65" width="108" height="2.0" fill="#3f3536"/><rect x="0" y="36.65" width="108" height="2.1" fill="#e8dacf"/><rect x="0" y="41.05" width="108" height="2.0" fill="#3f3536"/><rect x="0" y="43.05" width="108" height="2.1" fill="#e8dacf"/><rect x="0" y="47.45" width="108" height="2.0" fill="#3f3536"/><rect x="0" y="49.45" width="108" height="2.1" fill="#e8dacf"/><rect x="0" y="53.85" width="108" height="2.0" fill="#3f3536"/><rect x="0" y="55.85" width="108" height="2.1" fill="#e8dacf"/><rect x="0" y="60.25" width="108" height="2.0" fill="#3f3536"/><rect x="0" y="62.25" width="108" height="2.1" fill="#e8dacf"/><rect x="0" y="66.65" width="108" height="2.0" fill="#3f3536"/><rect x="0" y="68.65" width="108" height="2.1" fill="#e8dacf"/><rect x="0" y="73.05" width="108" height="2.0" fill="#3f3536"/><rect x="0" y="75.05" width="108" height="2.1" fill="#e8dacf"/><rect x="0" y="79.45" width="108" height="2.0" fill="#3f3536"/><rect x="0" y="81.45" width="108" height="2.1" fill="#e8dacf"/><rect x="0" y="85.85" width="108" height="2.0" fill="#3f3536"/><rect x="0" y="87.85" width="108" height="2.1" fill="#e8dacf"/><rect x="0" y="92.25" width="108" height="2.0" fill="#3f3536"/><rect x="0" y="94.25" width="108" height="2.1" fill="#e8dacf"/><rect x="0" y="98.65" width="108" height="2.0" fill="#3f3536"/><rect x="0" y="100.65" width="108" height="2.1" fill="#e8dacf"/><rect x="0" y="105.05" width="108" height="2.0" fill="#3f3536"/><rect x="0" y="107.05" width="108" height="2.1" fill="#e8dacf"/><path d="M9.0 2.65v2M17.0 4.65v2.1M1.0 6.75v2.3M35.2 2.65v2M43.2 4.65v2.1M27.2 6.75v2.3M61.4 2.65v2M69.4 4.65v2.1M53.4 6.75v2.3M87.6 2.65v2M95.6 4.65v2.1M79.6 6.75v2.3M5.8 2.65v2M13.8 4.65v2.1M105.8 6.75v2.3M22.0 9.05v2M30.0 11.05v2.1M14.0 13.15v2.3M48.2 9.05v2M56.2 11.05v2.1M40.2 13.15v2.3M74.4 9.05v2M82.4 11.05v2.1M66.4 13.15v2.3M100.6 9.05v2M0.6 11.05v2.1M92.6 13.15v2.3M18.8 9.05v2M26.8 11.05v2.1M10.8 13.15v2.3M9.0 15.45v2M17.0 17.45v2.1M1.0 19.55v2.3M35.2 15.45v2M43.2 17.45v2.1M27.2 19.55v2.3M61.4 15.45v2M69.4 17.45v2.1M53.4 19.55v2.3M87.6 15.45v2M95.6 17.45v2.1M79.6 19.55v2.3M5.8 15.45v2M13.8 17.45v2.1M105.8 19.55v2.3M22.0 21.85v2M30.0 23.85v2.1M14.0 25.95v2.3M48.2 21.85v2M56.2 23.85v2.1M40.2 25.95v2.3M74.4 21.85v2M82.4 23.85v2.1M66.4 25.95v2.3M100.6 21.85v2M0.6 23.85v2.1M92.6 25.95v2.3M18.8 21.85v2M26.8 23.85v2.1M10.8 25.95v2.3M9.0 28.25v2M17.0 30.25v2.1M1.0 32.35v2.3M35.2 28.25v2M43.2 30.25v2.1M27.2 32.35v2.3M61.4 28.25v2M69.4 30.25v2.1M53.4 32.35v2.3M87.6 28.25v2M95.6 30.25v2.1M79.6 32.35v2.3M5.8 28.25v2M13.8 30.25v2.1M105.8 32.35v2.3M22.0 34.65v2M30.0 36.65v2.1M14.0 38.75v2.3M48.2 34.65v2M56.2 36.65v2.1M40.2 38.75v2.3M74.4 34.65v2M82.4 36.65v2.1M66.4 38.75v2.3M100.6 34.65v2M0.6 36.65v2.1M92.6 38.75v2.3M18.8 34.65v2M26.8 36.65v2.1M10.8 38.75v2.3M9.0 41.05v2M17.0 43.05v2.1M1.0 45.15v2.3M35.2 41.05v2M43.2 43.05v2.1M27.2 45.15v2.3M61.4 41.05v2M69.4 43.05v2.1M53.4 45.15v2.3M87.6 41.05v2M95.6 43.05v2.1M79.6 45.15v2.3M5.8 41.05v2M13.8 43.05v2.1M105.8 45.15v2.3M22.0 47.45v2M30.0 49.45v2.1M14.0 51.55v2.3M48.2 47.45v2M56.2 49.45v2.1M40.2 51.55v2.3M74.4 47.45v2M82.4 49.45v2.1M66.4 51.55v2.3M100.6 47.45v2M0.6 49.45v2.1M92.6 51.55v2.3M18.8 47.45v2M26.8 49.45v2.1M10.8 51.55v2.3M9.0 53.85v2M17.0 55.85v2.1M1.0 57.95v2.3M35.2 53.85v2M43.2 55.85v2.1M27.2 57.95v2.3M61.4 53.85v2M69.4 55.85v2.1M53.4 57.95v2.3M87.6 53.85v2M95.6 55.85v2.1M79.6 57.95v2.3M5.8 53.85v2M13.8 55.85v2.1M105.8 57.95v2.3M22.0 60.25v2M30.0 62.25v2.1M14.0 64.35v2.3M48.2 60.25v2M56.2 62.25v2.1M40.2 64.35v2.3M74.4 60.25v2M82.4 62.25v2.1M66.4 64.35v2.3M100.6 60.25v2M0.6 62.25v2.1M92.6 64.35v2.3M18.8 60.25v2M26.8 62.25v2.1M10.8 64.35v2.3M9.0 66.65v2M17.0 68.65v2.1M1.0 70.75v2.3M35.2 66.65v2M43.2 68.65v2.1M27.2 70.75v2.3M61.4 66.65v2M69.4 68.65v2.1M53.4 70.75v2.3M87.6 66.65v2M95.6 68.65v2.1M79.6 70.75v2.3M5.8 66.65v2M13.8 68.65v2.1M105.8 70.75v2.3M22.0 73.05v2M30.0 75.05v2.1M14.0 77.15v2.3M48.2 73.05v2M56.2 75.05v2.1M40.2 77.15v2.3M74.4 73.05v2M82.4 75.05v2.1M66.4 77.15v2.3M100.6 73.05v2M0.6 75.05v2.1M92.6 77.15v2.3M18.8 73.05v2M26.8 75.05v2.1M10.8 77.15v2.3M9.0 79.45v2M17.0 81.45v2.1M1.0 83.55v2.3M35.2 79.45v2M43.2 81.45v2.1M27.2 83.55v2.3M61.4 79.45v2M69.4 81.45v2.1M53.4 83.55v2.3M87.6 79.45v2M95.6 81.45v2.1M79.6 83.55v2.3M5.8 79.45v2M13.8 81.45v2.1M105.8 83.55v2.3M22.0 85.85v2M30.0 87.85v2.1M14.0 89.95v2.3M48.2 85.85v2M56.2 87.85v2.1M40.2 89.95v2.3M74.4 85.85v2M82.4 87.85v2.1M66.4 89.95v2.3M100.6 85.85v2M0.6 87.85v2.1M92.6 89.95v2.3M18.8 85.85v2M26.8 87.85v2.1M10.8 89.95v2.3M9.0 92.25v2M17.0 94.25v2.1M1.0 96.35v2.3M35.2 92.25v2M43.2 94.25v2.1M27.2 96.35v2.3M61.4 92.25v2M69.4 94.25v2.1M53.4 96.35v2.3M87.6 92.25v2M95.6 94.25v2.1M79.6 96.35v2.3M5.8 92.25v2M13.8 94.25v2.1M105.8 96.35v2.3M22.0 98.65v2M30.0 100.65v2.1M14.0 102.75v2.3M48.2 98.65v2M56.2 100.65v2.1M40.2 102.75v2.3M74.4 98.65v2M82.4 100.65v2.1M66.4 102.75v2.3M100.6 98.65v2M0.6 100.65v2.1M92.6 102.75v2.3M18.8 98.65v2M26.8 100.65v2.1M10.8 102.75v2.3M9.0 105.05v2M17.0 107.05v2.1M1.0 109.15v2.3M35.2 105.05v2M43.2 107.05v2.1M27.2 109.15v2.3M61.4 105.05v2M69.4 107.05v2.1M53.4 109.15v2.3M87.6 105.05v2M95.6 107.05v2.1M79.6 109.15v2.3M5.8 105.05v2M13.8 107.05v2.1M105.8 109.15v2.3" stroke="#9c8a80" stroke-width=".5" opacity=".45" fill="none"/></svg></div><div class="tile" style="left:142.2px;top:195.0px"><svg width="108" height="107.9" viewBox="0 0 108 107.9" style="left:0;top:0"><defs><linearGradient id="w64" x1="0.11" y1="0" x2="0.00" y2="1"><stop offset="0.00" stop-color="#fff" stop-opacity="0.017"/><stop offset="0.27" stop-color="#000" stop-opacity="0.021"/><stop offset="0.52" stop-color="#fff" stop-opacity="0.006"/><stop offset="0.68" stop-color="#000" stop-opacity="0.019"/></linearGradient><linearGradient id="w65" x1="0.15" y1="0" x2="0.00" y2="1"><stop offset="0.00" stop-color="#000" stop-opacity="0.012"/><stop offset="0.35" stop-color="#fff" stop-opacity="0.059"/><stop offset="0.51" stop-color="#fff" stop-opacity="0.042"/><stop offset="0.66" stop-color="#000" stop-opacity="0.031"/></linearGradient><linearGradient id="w66" x1="0.00" y1="0" x2="0.07" y2="1"><stop offset="0.00" stop-color="#fff" stop-opacity="0.050"/><stop offset="0.38" stop-color="#fff" stop-opacity="0.022"/><stop offset="0.70" stop-color="#000" stop-opacity="0.043"/></linearGradient><linearGradient id="w67" x1="0.03" y1="0" x2="0.00" y2="1"><stop offset="0.00" stop-color="#fff" stop-opacity="0.012"/><stop offset="0.40" stop-color="#000" stop-opacity="0.005"/><stop offset="0.63" stop-color="#000" stop-opacity="0.023"/></linearGradient><linearGradient id="w68" x1="0.09" y1="0" x2="0.00" y2="1"><stop offset="0.00" stop-color="#000" stop-opacity="0.026"/><stop offset="0.37" stop-color="#000" stop-opacity="0.027"/><stop offset="0.53" stop-color="#fff" stop-opacity="0.048"/><stop offset="0.78" stop-color="#fff" stop-opacity="0.024"/></linearGradient><linearGradient id="w69" x1="0.00" y1="0" x2="0.08" y2="1"><stop offset="0.00" stop-color="#000" stop-opacity="0.004"/><stop offset="0.32" stop-color="#fff" stop-opacity="0.051"/><stop offset="0.60" stop-color="#000" stop-opacity="0.017"/><stop offset="0.93" stop-color="#000" stop-opacity="0.002"/></linearGradient><linearGradient id="w70" x1="0.00" y1="0" x2="0.14" y2="1"><stop offset="0.00" stop-color="#000" stop-opacity="0.029"/><stop offset="0.19" stop-color="#fff" stop-opacity="0.064"/><stop offset="0.53" stop-color="#fff" stop-opacity="0.026"/><stop offset="0.77" stop-color="#000" stop-opacity="0.021"/><stop offset="0.99" stop-color="#fff" stop-opacity="0.025"/></linearGradient><linearGradient id="w71" x1="0.00" y1="0" x2="0.14" y2="1"><stop offset="0.00" stop-color="#fff" stop-opacity="0.034"/><stop offset="0.29" stop-color="#000" stop-opacity="0.043"/><stop offset="0.56" stop-color="#000" stop-opacity="0.026"/><stop offset="0.76" stop-color="#000" stop-opacity="0.022"/><stop offset="1.00" stop-color="#000" stop-opacity="0.000"/></linearGradient><linearGradient id="w72" x1="0.00" y1="0" x2="0.09" y2="1"><stop offset="0.00" stop-color="#000" stop-opacity="0.021"/><stop offset="0.16" stop-color="#fff" stop-opacity="0.041"/><stop offset="0.44" stop-color="#fff" stop-opacity="0.056"/><stop offset="0.79" stop-color="#000" stop-opacity="0.001"/></linearGradient></defs><rect width="108" height="107.9" fill="#615d5d"/><rect x="0" y="0" width="39.1" height="30" fill="url(#w64)"/><rect x="39.1" y="0" width="38.9" height="30" fill="url(#w65)"/><rect x="78" y="0" width="30" height="30" fill="url(#w66)"/><rect x="0" y="30" width="39.1" height="39" fill="url(#w67)"/><rect x="39.1" y="30" width="38.9" height="39" fill="url(#w68)"/><rect x="78" y="30" width="30" height="39" fill="url(#w69)"/><rect x="0" y="69" width="39.1" height="38.900000000000006" fill="url(#w70)"/><rect x="39.1" y="69" width="38.9" height="38.900000000000006" fill="url(#w71)"/><rect x="78" y="69" width="30" height="38.900000000000006" fill="url(#w72)"/><path d="M39.10 0V107.9M78.00 0V107.9M0 30.00H108M0 69.00H108" stroke="#a09c9c" stroke-width="0.55" fill="none" opacity="1"/></svg></div><div class="tile" style="left:263.6px;top:195.0px"><svg width="108" height="107.9" viewBox="0 0 108 107.9" style="left:0;top:0"><defs><linearGradient id="w73" x1="0.00" y1="0" x2="0.14" y2="1"><stop offset="0.00" stop-color="#fff" stop-opacity="0.006"/><stop offset="0.24" stop-color="#fff" stop-opacity="0.048"/><stop offset="0.56" stop-color="#000" stop-opacity="0.011"/><stop offset="0.76" stop-color="#fff" stop-opacity="0.038"/><stop offset="0.95" stop-color="#000" stop-opacity="0.029"/></linearGradient><linearGradient id="w74" x1="0.00" y1="0" x2="0.11" y2="1"><stop offset="0.00" stop-color="#000" stop-opacity="0.024"/><stop offset="0.26" stop-color="#000" stop-opacity="0.041"/><stop offset="0.63" stop-color="#000" stop-opacity="0.021"/><stop offset="0.86" stop-color="#000" stop-opacity="0.019"/></linearGradient><linearGradient id="w75" x1="0.10" y1="0" x2="0.00" y2="1"><stop offset="0.00" stop-color="#fff" stop-opacity="0.015"/><stop offset="0.16" stop-color="#000" stop-opacity="0.008"/><stop offset="0.43" stop-color="#000" stop-opacity="0.045"/><stop offset="0.75" stop-color="#fff" stop-opacity="0.065"/></linearGradient><linearGradient id="w76" x1="0.03" y1="0" x2="0.00" y2="1"><stop offset="0.00" stop-color="#000" stop-opacity="0.036"/><stop offset="0.24" stop-color="#000" stop-opacity="0.007"/><stop offset="0.58" stop-color="#000" stop-opacity="0.029"/><stop offset="0.79" stop-color="#000" stop-opacity="0.042"/></linearGradient><linearGradient id="w77" x1="0.00" y1="0" x2="0.10" y2="1"><stop offset="0.00" stop-color="#000" stop-opacity="0.030"/><stop offset="0.26" stop-color="#000" stop-opacity="0.016"/><stop offset="0.60" stop-color="#000" stop-opacity="0.022"/><stop offset="0.80" stop-color="#000" stop-opacity="0.037"/></linearGradient><linearGradient id="w78" x1="0.00" y1="0" x2="0.11" y2="1"><stop offset="0.00" stop-color="#000" stop-opacity="0.035"/><stop offset="0.27" stop-color="#000" stop-opacity="0.043"/><stop offset="0.60" stop-color="#000" stop-opacity="0.014"/><stop offset="0.80" stop-color="#000" stop-opacity="0.042"/></linearGradient><linearGradient id="w79" x1="0.13" y1="0" x2="0.00" y2="1"><stop offset="0.00" stop-color="#000" stop-opacity="0.033"/><stop offset="0.38" stop-color="#fff" stop-opacity="0.065"/><stop offset="0.55" stop-color="#fff" stop-opacity="0.018"/><stop offset="0.76" stop-color="#fff" stop-opacity="0.049"/><stop offset="0.94" stop-color="#000" stop-opacity="0.011"/></linearGradient><linearGradient id="w80" x1="0.00" y1="0" x2="0.11" y2="1"><stop offset="0.00" stop-color="#000" stop-opacity="0.040"/><stop offset="0.34" stop-color="#fff" stop-opacity="0.024"/><stop offset="0.53" stop-color="#fff" stop-opacity="0.005"/><stop offset="0.92" stop-color="#fff" stop-opacity="0.003"/></linearGradient><linearGradient id="w81" x1="0.04" y1="0" x2="0.00" y2="1"><stop offset="0.00" stop-color="#fff" stop-opacity="0.053"/><stop offset="0.19" stop-color="#fff" stop-opacity="0.034"/><stop offset="0.34" stop-color="#fff" stop-opacity="0.052"/><stop offset="0.55" stop-color="#fff" stop-opacity="0.000"/><stop offset="0.94" stop-color="#fff" stop-opacity="0.019"/></linearGradient></defs><rect width="108" height="107.9" fill="#a59e9d"/><rect x="0" y="0" width="39.1" height="30" fill="url(#w73)"/><rect x="39.1" y="0" width="38.9" height="30" fill="url(#w74)"/><rect x="78" y="0" width="30" height="30" fill="url(#w75)"/><rect x="0" y="30" width="39.1" height="39" fill="url(#w76)"/><rect x="39.1" y="30" width="38.9" height="39" fill="url(#w77)"/><rect x="78" y="30" width="30" height="39" fill="url(#w78)"/><rect x="0" y="69" width="39.1" height="38.900000000000006" fill="url(#w79)"/><rect x="39.1" y="69" width="38.9" height="38.900000000000006" fill="url(#w80)"/><rect x="78" y="69" width="30" height="38.900000000000006" fill="url(#w81)"/><path d="M39.10 0V107.9M78.00 0V107.9M0 30.00H108M0 69.00H108" stroke="#d0cac9" stroke-width="0.55" fill="none" opacity="1"/></svg></div><div class="tile" style="left:385.0px;top:195.0px"><svg width="108" height="107.9" viewBox="0 0 108 107.9" style="left:0;top:0"><defs><linearGradient id="w82" x1="0.08" y1="0" x2="0.00" y2="1"><stop offset="0.00" stop-color="#fff" stop-opacity="0.024"/><stop offset="0.30" stop-color="#fff" stop-opacity="0.039"/><stop offset="0.68" stop-color="#000" stop-opacity="0.012"/><stop offset="0.89" stop-color="#000" stop-opacity="0.024"/></linearGradient><linearGradient id="w83" x1="0.03" y1="0" x2="0.00" y2="1"><stop offset="0.00" stop-color="#fff" stop-opacity="0.015"/><stop offset="0.19" stop-color="#000" stop-opacity="0.033"/><stop offset="0.51" stop-color="#fff" stop-opacity="0.010"/><stop offset="0.90" stop-color="#fff" stop-opacity="0.020"/></linearGradient><linearGradient id="w84" x1="0.00" y1="0" x2="0.11" y2="1"><stop offset="0.00" stop-color="#000" stop-opacity="0.027"/><stop offset="0.38" stop-color="#000" stop-opacity="0.032"/><stop offset="0.76" stop-color="#000" stop-opacity="0.033"/></linearGradient><linearGradient id="w85" x1="0.00" y1="0" x2="0.14" y2="1"><stop offset="0.00" stop-color="#fff" stop-opacity="0.057"/><stop offset="0.17" stop-color="#fff" stop-opacity="0.032"/><stop offset="0.39" stop-color="#000" stop-opacity="0.035"/><stop offset="0.75" stop-color="#000" stop-opacity="0.023"/><stop offset="1.00" stop-color="#000" stop-opacity="0.024"/></linearGradient><linearGradient id="w86" x1="0.08" y1="0" x2="0.00" y2="1"><stop offset="0.00" stop-color="#000" stop-opacity="0.031"/><stop offset="0.38" stop-color="#000" stop-opacity="0.045"/><stop offset="0.70" stop-color="#fff" stop-opacity="0.045"/><stop offset="0.93" stop-color="#fff" stop-opacity="0.046"/></linearGradient><linearGradient id="w87" x1="0.00" y1="0" x2="0.10" y2="1"><stop offset="0.00" stop-color="#000" stop-opacity="0.013"/><stop offset="0.17" stop-color="#000" stop-opacity="0.004"/><stop offset="0.52" stop-color="#000" stop-opacity="0.040"/><stop offset="0.67" stop-color="#000" stop-opacity="0.035"/></linearGradient><linearGradient id="w88" x1="0.14" y1="0" x2="0.00" y2="1"><stop offset="0.00" stop-color="#fff" stop-opacity="0.025"/><stop offset="0.30" stop-color="#000" stop-opacity="0.023"/><stop offset="0.70" stop-color="#000" stop-opacity="0.000"/><stop offset="0.87" stop-color="#fff" stop-opacity="0.062"/></linearGradient><linearGradient id="w89" x1="0.06" y1="0" x2="0.00" y2="1"><stop offset="0.00" stop-color="#000" stop-opacity="0.007"/><stop offset="0.16" stop-color="#000" stop-opacity="0.014"/><stop offset="0.55" stop-color="#000" stop-opacity="0.017"/><stop offset="0.92" stop-color="#000" stop-opacity="0.029"/></linearGradient><linearGradient id="w90" x1="0.00" y1="0" x2="0.02" y2="1"><stop offset="0.00" stop-color="#000" stop-opacity="0.019"/><stop offset="0.33" stop-color="#fff" stop-opacity="0.061"/><stop offset="0.59" stop-color="#000" stop-opacity="0.023"/><stop offset="0.88" stop-color="#fff" stop-opacity="0.051"/></linearGradient></defs><rect width="108" height="107.9" fill="#6f6462"/><rect x="0" y="0" width="39.1" height="30" fill="#736866"/><rect x="0" y="0" width="39.1" height="30" fill="url(#w82)"/><rect x="39.1" y="0" width="38.9" height="30" fill="#6d6260"/><rect x="39.1" y="0" width="38.9" height="30" fill="url(#w83)"/><rect x="78" y="0" width="30" height="30" fill="#706562"/><rect x="78" y="0" width="30" height="30" fill="url(#w84)"/><rect x="0" y="30" width="39.1" height="39" fill="#685d5b"/><rect x="0" y="30" width="39.1" height="39" fill="url(#w85)"/><rect x="39.1" y="30" width="38.9" height="39" fill="#766b68"/><rect x="39.1" y="30" width="38.9" height="39" fill="url(#w86)"/><rect x="78" y="30" width="30" height="39" fill="#6e6361"/><rect x="78" y="30" width="30" height="39" fill="url(#w87)"/><rect x="0" y="69" width="39.1" height="38.900000000000006" fill="#716664"/><rect x="0" y="69" width="39.1" height="38.900000000000006" fill="url(#w88)"/><rect x="39.1" y="69" width="38.9" height="38.900000000000006" fill="#6c6160"/><rect x="39.1" y="69" width="38.9" height="38.900000000000006" fill="url(#w89)"/><rect x="78" y="69" width="30" height="38.900000000000006" fill="#726764"/><rect x="78" y="69" width="30" height="38.900000000000006" fill="url(#w90)"/><path d="M39.10 0V107.9M78.00 0V107.9M0 30.00H108M0 69.00H108" stroke="#a89e9b" stroke-width="0.55" fill="none" opacity="1"/></svg></div><div class="tile" style="left:506.3px;top:195.0px"><svg width="108" height="107.9" viewBox="0 0 108 107.9" style="left:0;top:0"><defs><linearGradient id="w91" x1="0.08" y1="0" x2="0.00" y2="1"><stop offset="0.00" stop-color="#fff" stop-opacity="0.047"/><stop offset="0.27" stop-color="#fff" stop-opacity="0.004"/><stop offset="0.52" stop-color="#000" stop-opacity="0.036"/><stop offset="0.86" stop-color="#fff" stop-opacity="0.034"/></linearGradient><linearGradient id="w92" x1="0.00" y1="0" x2="0.08" y2="1"><stop offset="0.00" stop-color="#fff" stop-opacity="0.017"/><stop offset="0.39" stop-color="#fff" stop-opacity="0.054"/><stop offset="0.74" stop-color="#000" stop-opacity="0.009"/><stop offset="0.96" stop-color="#000" stop-opacity="0.004"/></linearGradient><linearGradient id="w93" x1="0.00" y1="0" x2="0.05" y2="1"><stop offset="0.00" stop-color="#fff" stop-opacity="0.012"/><stop offset="0.27" stop-color="#fff" stop-opacity="0.061"/><stop offset="0.62" stop-color="#000" stop-opacity="0.000"/><stop offset="0.85" stop-color="#000" stop-opacity="0.038"/></linearGradient><linearGradient id="w94" x1="0.03" y1="0" x2="0.00" y2="1"><stop offset="0.00" stop-color="#000" stop-opacity="0.019"/><stop offset="0.19" stop-color="#000" stop-opacity="0.012"/><stop offset="0.54" stop-color="#fff" stop-opacity="0.003"/><stop offset="0.85" stop-color="#000" stop-opacity="0.023"/></linearGradient><linearGradient id="w95" x1="0.00" y1="0" x2="0.06" y2="1"><stop offset="0.00" stop-color="#fff" stop-opacity="0.065"/><stop offset="0.20" stop-color="#000" stop-opacity="0.041"/><stop offset="0.51" stop-color="#000" stop-opacity="0.012"/><stop offset="0.75" stop-color="#000" stop-opacity="0.029"/><stop offset="0.95" stop-color="#000" stop-opacity="0.005"/></linearGradient><linearGradient id="w96" x1="0.08" y1="0" x2="0.00" y2="1"><stop offset="0.00" stop-color="#fff" stop-opacity="0.008"/><stop offset="0.38" stop-color="#000" stop-opacity="0.021"/><stop offset="0.54" stop-color="#fff" stop-opacity="0.058"/><stop offset="0.93" stop-color="#000" stop-opacity="0.001"/></linearGradient><linearGradient id="w97" x1="0.00" y1="0" x2="0.14" y2="1"><stop offset="0.00" stop-color="#000" stop-opacity="0.039"/><stop offset="0.37" stop-color="#fff" stop-opacity="0.019"/><stop offset="0.57" stop-color="#000" stop-opacity="0.013"/><stop offset="0.78" stop-color="#fff" stop-opacity="0.022"/><stop offset="0.93" stop-color="#fff" stop-opacity="0.030"/></linearGradient><linearGradient id="w98" x1="0.00" y1="0" x2="0.09" y2="1"><stop offset="0.00" stop-color="#000" stop-opacity="0.026"/><stop offset="0.26" stop-color="#fff" stop-opacity="0.028"/><stop offset="0.46" stop-color="#fff" stop-opacity="0.004"/><stop offset="0.80" stop-color="#fff" stop-opacity="0.039"/></linearGradient><linearGradient id="w99" x1="0.00" y1="0" x2="0.02" y2="1"><stop offset="0.00" stop-color="#000" stop-opacity="0.045"/><stop offset="0.18" stop-color="#000" stop-opacity="0.035"/><stop offset="0.43" stop-color="#fff" stop-opacity="0.031"/><stop offset="0.64" stop-color="#000" stop-opacity="0.022"/><stop offset="0.85" stop-color="#000" stop-opacity="0.011"/></linearGradient></defs><rect width="108" height="107.9" fill="#a5968d"/><rect x="0" y="0" width="39.1" height="30" fill="#a89990"/><rect x="0" y="0" width="39.1" height="30" fill="url(#w91)"/><rect x="39.1" y="0" width="38.9" height="30" fill="#a7988f"/><rect x="39.1" y="0" width="38.9" height="30" fill="url(#w92)"/><rect x="78" y="0" width="30" height="30" fill="#a6978e"/><rect x="78" y="0" width="30" height="30" fill="url(#w93)"/><rect x="0" y="30" width="39.1" height="39" fill="#a3948b"/><rect x="0" y="30" width="39.1" height="39" fill="url(#w94)"/><rect x="39.1" y="30" width="38.9" height="39" fill="#9b8c84"/><rect x="39.1" y="30" width="38.9" height="39" fill="url(#w95)"/><rect x="78" y="30" width="30" height="39" fill="#a6978e"/><rect x="78" y="30" width="30" height="39" fill="url(#w96)"/><rect x="0" y="69" width="39.1" height="38.900000000000006" fill="#a1928a"/><rect x="0" y="69" width="39.1" height="38.900000000000006" fill="url(#w97)"/><rect x="39.1" y="69" width="38.9" height="38.900000000000006" fill="#a7988f"/><rect x="39.1" y="69" width="38.9" height="38.900000000000006" fill="url(#w98)"/><rect x="78" y="69" width="30" height="38.900000000000006" fill="#a6978e"/><rect x="78" y="69" width="30" height="38.900000000000006" fill="url(#w99)"/><path d="M39.10 0V107.9M78.00 0V107.9M0 30.00H108M0 69.00H108" stroke="#cfc3bb" stroke-width="0.55" fill="none" opacity="1"/></svg></div><div class="tile" style="left:627.8px;top:195.0px"><svg width="108" height="107.9" viewBox="0 0 108 107.9" style="left:0;top:0"><defs><linearGradient id="w100" x1="0.00" y1="0" x2="0.04" y2="1"><stop offset="0.00" stop-color="#000" stop-opacity="0.036"/><stop offset="0.39" stop-color="#fff" stop-opacity="0.055"/><stop offset="0.73" stop-color="#fff" stop-opacity="0.042"/></linearGradient><linearGradient id="w101" x1="0.12" y1="0" x2="0.00" y2="1"><stop offset="0.00" stop-color="#000" stop-opacity="0.039"/><stop offset="0.25" stop-color="#fff" stop-opacity="0.037"/><stop offset="0.40" stop-color="#fff" stop-opacity="0.027"/><stop offset="0.59" stop-color="#000" stop-opacity="0.007"/><stop offset="0.94" stop-color="#fff" stop-opacity="0.040"/></linearGradient><linearGradient id="w102" x1="0.11" y1="0" x2="0.00" y2="1"><stop offset="0.00" stop-color="#fff" stop-opacity="0.014"/><stop offset="0.20" stop-color="#fff" stop-opacity="0.057"/><stop offset="0.43" stop-color="#fff" stop-opacity="0.035"/><stop offset="0.75" stop-color="#fff" stop-opacity="0.012"/></linearGradient><linearGradient id="w103" x1="0.09" y1="0" x2="0.00" y2="1"><stop offset="0.00" stop-color="#000" stop-opacity="0.013"/><stop offset="0.24" stop-color="#fff" stop-opacity="0.061"/><stop offset="0.46" stop-color="#000" stop-opacity="0.014"/><stop offset="0.76" stop-color="#fff" stop-opacity="0.039"/></linearGradient><linearGradient id="w104" x1="0.13" y1="0" x2="0.00" y2="1"><stop offset="0.00" stop-color="#000" stop-opacity="0.037"/><stop offset="0.27" stop-color="#000" stop-opacity="0.008"/><stop offset="0.54" stop-color="#fff" stop-opacity="0.004"/><stop offset="0.93" stop-color="#fff" stop-opacity="0.062"/></linearGradient><linearGradient id="w105" x1="0.03" y1="0" x2="0.00" y2="1"><stop offset="0.00" stop-color="#000" stop-opacity="0.016"/><stop offset="0.29" stop-color="#fff" stop-opacity="0.029"/><stop offset="0.62" stop-color="#fff" stop-opacity="0.008"/><stop offset="0.83" stop-color="#000" stop-opacity="0.015"/></linearGradient><linearGradient id="w106" x1="0.00" y1="0" x2="0.01" y2="1"><stop offset="0.00" stop-color="#000" stop-opacity="0.005"/><stop offset="0.34" stop-color="#000" stop-opacity="0.039"/><stop offset="0.50" stop-color="#fff" stop-opacity="0.014"/><stop offset="0.77" stop-color="#000" stop-opacity="0.041"/></linearGradient><linearGradient id="w107" x1="0.00" y1="0" x2="0.13" y2="1"><stop offset="0.00" stop-color="#fff" stop-opacity="0.020"/><stop offset="0.23" stop-color="#fff" stop-opacity="0.052"/><stop offset="0.54" stop-color="#000" stop-opacity="0.045"/><stop offset="0.73" stop-color="#fff" stop-opacity="0.005"/></linearGradient><linearGradient id="w108" x1="0.00" y1="0" x2="0.13" y2="1"><stop offset="0.00" stop-color="#fff" stop-opacity="0.015"/><stop offset="0.30" stop-color="#000" stop-opacity="0.021"/><stop offset="0.55" stop-color="#fff" stop-opacity="0.064"/><stop offset="0.86" stop-color="#000" stop-opacity="0.015"/></linearGradient></defs><rect width="108" height="107.9" fill="#e6dcd4"/><rect x="0" y="0" width="39.1" height="30" fill="url(#w100)"/><rect x="39.1" y="0" width="38.9" height="30" fill="url(#w101)"/><rect x="78" y="0" width="30" height="30" fill="url(#w102)"/><rect x="0" y="30" width="39.1" height="39" fill="url(#w103)"/><rect x="39.1" y="30" width="38.9" height="39" fill="url(#w104)"/><rect x="78" y="30" width="30" height="39" fill="url(#w105)"/><rect x="0" y="69" width="39.1" height="38.900000000000006" fill="url(#w106)"/><rect x="39.1" y="69" width="38.9" height="38.900000000000006" fill="url(#w107)"/><rect x="78" y="69" width="30" height="38.900000000000006" fill="url(#w108)"/><path d="M39.10 0V107.9M78.00 0V107.9M0 30.00H108M0 69.00H108" stroke="#efe8e1" stroke-width="0.55" fill="none" opacity="1"/></svg></div><div class="tile" style="left:142.2px;top:318.8px"><svg width="108" height="107.9" viewBox="0 0 108 107.9" style="left:0;top:0"><rect width="108" height="107.9" fill="#9b8a66"/><rect x="0.00" y="-3.00" width="6.48" height="6.48" fill="#9b8355"/><rect x="6.48" y="-3.00" width="6.48" height="6.48" fill="#b29a6b"/><rect x="12.96" y="-3.00" width="6.48" height="6.48" fill="#847b68"/><rect x="19.44" y="-3.00" width="6.48" height="6.48" fill="#594f49"/><rect x="25.92" y="-3.00" width="6.48" height="6.48" fill="#594f49"/><rect x="32.40" y="-3.00" width="6.48" height="6.48" fill="#594f49"/><rect x="38.88" y="-3.00" width="6.48" height="6.48" fill="#594f49"/><rect x="45.36" y="-3.00" width="6.48" height="6.48" fill="#847b68"/><rect x="51.84" y="-3.00" width="6.48" height="6.48" fill="#847b68"/><rect x="58.32" y="-3.00" width="6.48" height="6.48" fill="#594f49"/><rect x="64.80" y="-3.00" width="6.48" height="6.48" fill="#594f49"/><rect x="71.28" y="-3.00" width="6.48" height="6.48" fill="#594f49"/><rect x="77.76" y="-3.00" width="6.48" height="6.48" fill="#b29a6b"/><rect x="84.24" y="-3.00" width="6.48" height="6.48" fill="#b29a6b"/><rect x="90.72" y="-3.00" width="6.48" height="6.48" fill="#b29a6b"/><rect x="97.20" y="-3.00" width="6.48" height="6.48" fill="#594f49"/><rect x="103.68" y="-3.00" width="6.48" height="6.48" fill="#594f49"/><rect x="0.00" y="3.48" width="6.48" height="6.48" fill="#847b68"/><rect x="6.48" y="3.48" width="6.48" height="6.48" fill="#9b8355"/><rect x="12.96" y="3.48" width="6.48" height="6.48" fill="#b29a6b"/><rect x="19.44" y="3.48" width="6.48" height="6.48" fill="#594f49"/><rect x="25.92" y="3.48" width="6.48" height="6.48" fill="#b29a6b"/><rect x="32.40" y="3.48" width="6.48" height="6.48" fill="#b29a6b"/><rect x="38.88" y="3.48" width="6.48" height="6.48" fill="#b29a6b"/><rect x="45.36" y="3.48" width="6.48" height="6.48" fill="#594f49"/><rect x="51.84" y="3.48" width="6.48" height="6.48" fill="#b29a6b"/><rect x="58.32" y="3.48" width="6.48" height="6.48" fill="#594f49"/><rect x="64.80" y="3.48" width="6.48" height="6.48" fill="#b29a6b"/><rect x="71.28" y="3.48" width="6.48" height="6.48" fill="#847b68"/><rect x="77.76" y="3.48" width="6.48" height="6.48" fill="#847b68"/><rect x="84.24" y="3.48" width="6.48" height="6.48" fill="#9b8355"/><rect x="90.72" y="3.48" width="6.48" height="6.48" fill="#b29a6b"/><rect x="97.20" y="3.48" width="6.48" height="6.48" fill="#594f49"/><rect x="103.68" y="3.48" width="6.48" height="6.48" fill="#b29a6b"/><rect x="0.00" y="9.96" width="6.48" height="6.48" fill="#9b8355"/><rect x="6.48" y="9.96" width="6.48" height="6.48" fill="#9b8355"/><rect x="12.96" y="9.96" width="6.48" height="6.48" fill="#847b68"/><rect x="19.44" y="9.96" width="6.48" height="6.48" fill="#b29a6b"/><rect x="25.92" y="9.96" width="6.48" height="6.48" fill="#9b8355"/><rect x="32.40" y="9.96" width="6.48" height="6.48" fill="#9b8355"/><rect x="38.88" y="9.96" width="6.48" height="6.48" fill="#9b8355"/><rect x="45.36" y="9.96" width="6.48" height="6.48" fill="#594f49"/><rect x="51.84" y="9.96" width="6.48" height="6.48" fill="#847b68"/><rect x="58.32" y="9.96" width="6.48" height="6.48" fill="#b29a6b"/><rect x="64.80" y="9.96" width="6.48" height="6.48" fill="#594f49"/><rect x="71.28" y="9.96" width="6.48" height="6.48" fill="#9b8355"/><rect x="77.76" y="9.96" width="6.48" height="6.48" fill="#9b8355"/><rect x="84.24" y="9.96" width="6.48" height="6.48" fill="#9b8355"/><rect x="90.72" y="9.96" width="6.48" height="6.48" fill="#847b68"/><rect x="97.20" y="9.96" width="6.48" height="6.48" fill="#b29a6b"/><rect x="103.68" y="9.96" width="6.48" height="6.48" fill="#594f49"/><rect x="0.00" y="16.44" width="6.48" height="6.48" fill="#847b68"/><rect x="6.48" y="16.44" width="6.48" height="6.48" fill="#847b68"/><rect x="12.96" y="16.44" width="6.48" height="6.48" fill="#9b8355"/><rect x="19.44" y="16.44" width="6.48" height="6.48" fill="#847b68"/><rect x="25.92" y="16.44" width="6.48" height="6.48" fill="#9b8355"/><rect x="32.40" y="16.44" width="6.48" height="6.48" fill="#847b68"/><rect x="38.88" y="16.44" width="6.48" height="6.48" fill="#b29a6b"/><rect x="45.36" y="16.44" width="6.48" height="6.48" fill="#b29a6b"/><rect x="51.84" y="16.44" width="6.48" height="6.48" fill="#9b8355"/><rect x="58.32" y="16.44" width="6.48" height="6.48" fill="#b29a6b"/><rect x="64.80" y="16.44" width="6.48" height="6.48" fill="#594f49"/><rect x="71.28" y="16.44" width="6.48" height="6.48" fill="#847b68"/><rect x="77.76" y="16.44" width="6.48" height="6.48" fill="#847b68"/><rect x="84.24" y="16.44" width="6.48" height="6.48" fill="#847b68"/><rect x="90.72" y="16.44" width="6.48" height="6.48" fill="#9b8355"/><rect x="97.20" y="16.44" width="6.48" height="6.48" fill="#847b68"/><rect x="103.68" y="16.44" width="6.48" height="6.48" fill="#594f49"/><rect x="0.00" y="22.92" width="6.48" height="6.48" fill="#9b8355"/><rect x="6.48" y="22.92" width="6.48" height="6.48" fill="#9b8355"/><rect x="12.96" y="22.92" width="6.48" height="6.48" fill="#9b8355"/><rect x="19.44" y="22.92" width="6.48" height="6.48" fill="#847b68"/><rect x="25.92" y="22.92" width="6.48" height="6.48" fill="#b29a6b"/><rect x="32.40" y="22.92" width="6.48" height="6.48" fill="#9b8355"/><rect x="38.88" y="22.92" width="6.48" height="6.48" fill="#594f49"/><rect x="45.36" y="22.92" width="6.48" height="6.48" fill="#594f49"/><rect x="51.84" y="22.92" width="6.48" height="6.48" fill="#9b8355"/><rect x="58.32" y="22.92" width="6.48" height="6.48" fill="#847b68"/><rect x="64.80" y="22.92" width="6.48" height="6.48" fill="#b29a6b"/><rect x="71.28" y="22.92" width="6.48" height="6.48" fill="#594f49"/><rect x="77.76" y="22.92" width="6.48" height="6.48" fill="#9b8355"/><rect x="84.24" y="22.92" width="6.48" height="6.48" fill="#9b8355"/><rect x="90.72" y="22.92" width="6.48" height="6.48" fill="#9b8355"/><rect x="97.20" y="22.92" width="6.48" height="6.48" fill="#847b68"/><rect x="103.68" y="22.92" width="6.48" height="6.48" fill="#b29a6b"/><rect x="0.00" y="29.40" width="6.48" height="6.48" fill="#b29a6b"/><rect x="6.48" y="29.40" width="6.48" height="6.48" fill="#b29a6b"/><rect x="12.96" y="29.40" width="6.48" height="6.48" fill="#847b68"/><rect x="19.44" y="29.40" width="6.48" height="6.48" fill="#9b8355"/><rect x="25.92" y="29.40" width="6.48" height="6.48" fill="#847b68"/><rect x="32.40" y="29.40" width="6.48" height="6.48" fill="#9b8355"/><rect x="38.88" y="29.40" width="6.48" height="6.48" fill="#b29a6b"/><rect x="45.36" y="29.40" width="6.48" height="6.48" fill="#847b68"/><rect x="51.84" y="29.40" width="6.48" height="6.48" fill="#847b68"/><rect x="58.32" y="29.40" width="6.48" height="6.48" fill="#594f49"/><rect x="64.80" y="29.40" width="6.48" height="6.48" fill="#b29a6b"/><rect x="71.28" y="29.40" width="6.48" height="6.48" fill="#594f49"/><rect x="77.76" y="29.40" width="6.48" height="6.48" fill="#b29a6b"/><rect x="84.24" y="29.40" width="6.48" height="6.48" fill="#b29a6b"/><rect x="90.72" y="29.40" width="6.48" height="6.48" fill="#847b68"/><rect x="97.20" y="29.40" width="6.48" height="6.48" fill="#9b8355"/><rect x="103.68" y="29.40" width="6.48" height="6.48" fill="#847b68"/><rect x="0.00" y="35.88" width="6.48" height="6.48" fill="#594f49"/><rect x="6.48" y="35.88" width="6.48" height="6.48" fill="#9b8355"/><rect x="12.96" y="35.88" width="6.48" height="6.48" fill="#9b8355"/><rect x="19.44" y="35.88" width="6.48" height="6.48" fill="#9b8355"/><rect x="25.92" y="35.88" width="6.48" height="6.48" fill="#b29a6b"/><rect x="32.40" y="35.88" width="6.48" height="6.48" fill="#847b68"/><rect x="38.88" y="35.88" width="6.48" height="6.48" fill="#9b8355"/><rect x="45.36" y="35.88" width="6.48" height="6.48" fill="#9b8355"/><rect x="51.84" y="35.88" width="6.48" height="6.48" fill="#9b8355"/><rect x="58.32" y="35.88" width="6.48" height="6.48" fill="#594f49"/><rect x="64.80" y="35.88" width="6.48" height="6.48" fill="#b29a6b"/><rect x="71.28" y="35.88" width="6.48" height="6.48" fill="#847b68"/><rect x="77.76" y="35.88" width="6.48" height="6.48" fill="#594f49"/><rect x="84.24" y="35.88" width="6.48" height="6.48" fill="#594f49"/><rect x="90.72" y="35.88" width="6.48" height="6.48" fill="#594f49"/><rect x="97.20" y="35.88" width="6.48" height="6.48" fill="#9b8355"/><rect x="103.68" y="35.88" width="6.48" height="6.48" fill="#b29a6b"/><rect x="0.00" y="42.36" width="6.48" height="6.48" fill="#594f49"/><rect x="6.48" y="42.36" width="6.48" height="6.48" fill="#847b68"/><rect x="12.96" y="42.36" width="6.48" height="6.48" fill="#847b68"/><rect x="19.44" y="42.36" width="6.48" height="6.48" fill="#847b68"/><rect x="25.92" y="42.36" width="6.48" height="6.48" fill="#594f49"/><rect x="32.40" y="42.36" width="6.48" height="6.48" fill="#b29a6b"/><rect x="38.88" y="42.36" width="6.48" height="6.48" fill="#9b8355"/><rect x="45.36" y="42.36" width="6.48" height="6.48" fill="#b29a6b"/><rect x="51.84" y="42.36" width="6.48" height="6.48" fill="#847b68"/><rect x="58.32" y="42.36" width="6.48" height="6.48" fill="#b29a6b"/><rect x="64.80" y="42.36" width="6.48" height="6.48" fill="#594f49"/><rect x="71.28" y="42.36" width="6.48" height="6.48" fill="#b29a6b"/><rect x="77.76" y="42.36" width="6.48" height="6.48" fill="#594f49"/><rect x="84.24" y="42.36" width="6.48" height="6.48" fill="#847b68"/><rect x="90.72" y="42.36" width="6.48" height="6.48" fill="#847b68"/><rect x="97.20" y="42.36" width="6.48" height="6.48" fill="#b29a6b"/><rect x="103.68" y="42.36" width="6.48" height="6.48" fill="#594f49"/><rect x="0.00" y="48.84" width="6.48" height="6.48" fill="#847b68"/><rect x="6.48" y="48.84" width="6.48" height="6.48" fill="#9b8355"/><rect x="12.96" y="48.84" width="6.48" height="6.48" fill="#9b8355"/><rect x="19.44" y="48.84" width="6.48" height="6.48" fill="#9b8355"/><rect x="25.92" y="48.84" width="6.48" height="6.48" fill="#594f49"/><rect x="32.40" y="48.84" width="6.48" height="6.48" fill="#b29a6b"/><rect x="38.88" y="48.84" width="6.48" height="6.48" fill="#847b68"/><rect x="45.36" y="48.84" width="6.48" height="6.48" fill="#594f49"/><rect x="51.84" y="48.84" width="6.48" height="6.48" fill="#594f49"/><rect x="58.32" y="48.84" width="6.48" height="6.48" fill="#594f49"/><rect x="64.80" y="48.84" width="6.48" height="6.48" fill="#594f49"/><rect x="71.28" y="48.84" width="6.48" height="6.48" fill="#847b68"/><rect x="77.76" y="48.84" width="6.48" height="6.48" fill="#847b68"/><rect x="84.24" y="48.84" width="6.48" height="6.48" fill="#594f49"/><rect x="90.72" y="48.84" width="6.48" height="6.48" fill="#594f49"/><rect x="97.20" y="48.84" width="6.48" height="6.48" fill="#594f49"/><rect x="103.68" y="48.84" width="6.48" height="6.48" fill="#594f49"/><rect x="0.00" y="55.32" width="6.48" height="6.48" fill="#b29a6b"/><rect x="6.48" y="55.32" width="6.48" height="6.48" fill="#9b8355"/><rect x="12.96" y="55.32" width="6.48" height="6.48" fill="#b29a6b"/><rect x="19.44" y="55.32" width="6.48" height="6.48" fill="#847b68"/><rect x="25.92" y="55.32" width="6.48" height="6.48" fill="#b29a6b"/><rect x="32.40" y="55.32" width="6.48" height="6.48" fill="#9b8355"/><rect x="38.88" y="55.32" width="6.48" height="6.48" fill="#847b68"/><rect x="45.36" y="55.32" width="6.48" height="6.48" fill="#594f49"/><rect x="51.84" y="55.32" width="6.48" height="6.48" fill="#b29a6b"/><rect x="58.32" y="55.32" width="6.48" height="6.48" fill="#847b68"/><rect x="64.80" y="55.32" width="6.48" height="6.48" fill="#847b68"/><rect x="71.28" y="55.32" width="6.48" height="6.48" fill="#594f49"/><rect x="77.76" y="55.32" width="6.48" height="6.48" fill="#b29a6b"/><rect x="84.24" y="55.32" width="6.48" height="6.48" fill="#594f49"/><rect x="90.72" y="55.32" width="6.48" height="6.48" fill="#b29a6b"/><rect x="97.20" y="55.32" width="6.48" height="6.48" fill="#847b68"/><rect x="103.68" y="55.32" width="6.48" height="6.48" fill="#847b68"/><rect x="0.00" y="61.80" width="6.48" height="6.48" fill="#b29a6b"/><rect x="6.48" y="61.80" width="6.48" height="6.48" fill="#9b8355"/><rect x="12.96" y="61.80" width="6.48" height="6.48" fill="#b29a6b"/><rect x="19.44" y="61.80" width="6.48" height="6.48" fill="#847b68"/><rect x="25.92" y="61.80" width="6.48" height="6.48" fill="#b29a6b"/><rect x="32.40" y="61.80" width="6.48" height="6.48" fill="#9b8355"/><rect x="38.88" y="61.80" width="6.48" height="6.48" fill="#847b68"/><rect x="45.36" y="61.80" width="6.48" height="6.48" fill="#594f49"/><rect x="51.84" y="61.80" width="6.48" height="6.48" fill="#b29a6b"/><rect x="58.32" y="61.80" width="6.48" height="6.48" fill="#847b68"/><rect x="64.80" y="61.80" width="6.48" height="6.48" fill="#847b68"/><rect x="71.28" y="61.80" width="6.48" height="6.48" fill="#594f49"/><rect x="77.76" y="61.80" width="6.48" height="6.48" fill="#b29a6b"/><rect x="84.24" y="61.80" width="6.48" height="6.48" fill="#594f49"/><rect x="90.72" y="61.80" width="6.48" height="6.48" fill="#b29a6b"/><rect x="97.20" y="61.80" width="6.48" height="6.48" fill="#847b68"/><rect x="103.68" y="61.80" width="6.48" height="6.48" fill="#847b68"/><path d="M6.48 0V107.9M12.96 0V107.9M19.44 0V107.9M25.92 0V107.9M32.40 0V107.9M38.88 0V107.9M45.36 0V107.9M51.84 0V107.9M58.32 0V107.9M64.80 0V107.9M71.28 0V107.9M77.76 0V107.9M84.24 0V107.9M90.72 0V107.9M97.20 0V107.9M103.68 0V107.9M0 3.48H108M0 9.96H108M0 16.44H108M0 22.92H108M0 29.40H108M0 35.88H108M0 42.36H108M0 48.84H108M0 55.32H108M0 61.80H108M0 68.28H108M0 74.76H108M0 81.24H108M0 87.72H108M0 94.20H108M0 100.68H108M0 107.16H108" stroke="#c4b48e" stroke-width="0.4" fill="none" opacity="0.3"/></svg></div><div class="tile" style="left:263.6px;top:318.8px"><svg width="108" height="107.9" viewBox="0 0 108 107.9" style="left:0;top:0"><rect width="108" height="107.9" fill="#75706e"/><path d="M25.40 0V107.9M51.60 0V107.9M77.80 0V107.9M104.00 0V107.9M0 4.20H108M0 8.52H108M0 12.84H108M0 17.16H108M0 21.48H108M0 25.80H108M0 30.12H108M0 34.44H108M0 38.76H108M0 43.08H108M0 47.40H108M0 51.72H108M0 56.04H108M0 60.36H108M0 64.68H108M0 69.00H108M0 73.32H108M0 77.64H108M0 81.96H108M0 86.28H108M0 90.60H108M0 94.92H108M0 99.24H108M0 103.56H108M0 107.88H108" stroke="#bcb7b5" stroke-width="0.5" fill="none" opacity="1"/></svg></div><div class="tile" style="left:385.0px;top:318.8px"><svg width="108" height="107.9" viewBox="0 0 108 107.9" style="left:0;top:0"><rect width="108" height="107.9" fill="#e2ded6"/><rect x="0" y="-22" width="25.4" height="26.2" fill="#e1ddd5"/><rect x="25.4" y="-22" width="26.200000000000003" height="26.2" fill="#e3ded5"/><rect x="51.6" y="-22" width="26.300000000000004" height="26.2" fill="#dfdcd5"/><rect x="77.9" y="-22" width="26.19999999999999" height="26.2" fill="#e2ddd5"/><rect x="104.1" y="-22" width="3.9000000000000057" height="26.2" fill="#e1ddd5"/><rect x="0" y="4.2" width="25.4" height="25.900000000000002" fill="#e4e0d6"/><rect x="25.4" y="4.2" width="26.200000000000003" height="25.900000000000002" fill="#e0dcd5"/><rect x="51.6" y="4.2" width="26.300000000000004" height="25.900000000000002" fill="#dfdcd6"/><rect x="77.9" y="4.2" width="26.19999999999999" height="25.900000000000002" fill="#e4dfd5"/><rect x="104.1" y="4.2" width="3.9000000000000057" height="25.900000000000002" fill="#e3dfd7"/><rect x="0" y="30.1" width="25.4" height="26.299999999999997" fill="#dedbd4"/><rect x="25.4" y="30.1" width="26.200000000000003" height="26.299999999999997" fill="#e3dfd5"/><rect x="51.6" y="30.1" width="26.300000000000004" height="26.299999999999997" fill="#dfdcd5"/><rect x="77.9" y="30.1" width="26.19999999999999" height="26.299999999999997" fill="#e3ddd4"/><rect x="104.1" y="30.1" width="3.9000000000000057" height="26.299999999999997" fill="#e1ddd5"/><rect x="0" y="56.4" width="25.4" height="26.199999999999996" fill="#e3dfd6"/><rect x="25.4" y="56.4" width="26.200000000000003" height="26.199999999999996" fill="#e0dcd5"/><rect x="51.6" y="56.4" width="26.300000000000004" height="26.199999999999996" fill="#e3dfd7"/><rect x="77.9" y="56.4" width="26.19999999999999" height="26.199999999999996" fill="#e2ddd5"/><rect x="104.1" y="56.4" width="3.9000000000000057" height="26.199999999999996" fill="#e0ddd5"/><rect x="0" y="82.6" width="25.4" height="25.400000000000006" fill="#e2ded6"/><rect x="25.4" y="82.6" width="26.200000000000003" height="25.400000000000006" fill="#e2ded6"/><rect x="51.6" y="82.6" width="26.300000000000004" height="25.400000000000006" fill="#e2ded6"/><rect x="77.9" y="82.6" width="26.19999999999999" height="25.400000000000006" fill="#e2ded6"/><rect x="104.1" y="82.6" width="3.9000000000000057" height="25.400000000000006" fill="#e2ded6"/><path d="M25.40 0V107.9M51.60 0V107.9M77.90 0V107.9M104.10 0V107.9M0 4.20H108M0 30.10H108M0 56.40H108M0 82.60H108" stroke="#ece9e3" stroke-width="0.6" fill="none" opacity="1"/></svg></div><div class="tile" style="left:506.3px;top:318.8px"><svg width="108" height="107.9" viewBox="0 0 108 107.9" style="left:0;top:0"><rect width="108" height="107.9" fill="#a9aaa9"/><rect x="0" y="-22" width="25.4" height="26.2" fill="#a9a9a9"/><rect x="25.4" y="-22" width="26.200000000000003" height="26.2" fill="#aaaaa8"/><rect x="51.6" y="-22" width="26.300000000000004" height="26.2" fill="#aaaaa8"/><rect x="77.9" y="-22" width="26.19999999999999" height="26.2" fill="#a9aaa9"/><rect x="104.1" y="-22" width="3.9000000000000057" height="26.2" fill="#aaaaa9"/><rect x="0" y="4.2" width="25.4" height="25.900000000000002" fill="#a9abaa"/><rect x="25.4" y="4.2" width="26.200000000000003" height="25.900000000000002" fill="#aaaaa8"/><rect x="51.6" y="4.2" width="26.300000000000004" height="25.900000000000002" fill="#abaaa8"/><rect x="77.9" y="4.2" width="26.19999999999999" height="25.900000000000002" fill="#a9abaa"/><rect x="104.1" y="4.2" width="3.9000000000000057" height="25.900000000000002" fill="#aaaaa9"/><rect x="0" y="30.1" width="25.4" height="26.299999999999997" fill="#aaaba8"/><rect x="25.4" y="30.1" width="26.200000000000003" height="26.299999999999997" fill="#a9a9a9"/><rect x="51.6" y="30.1" width="26.300000000000004" height="26.299999999999997" fill="#abaaa8"/><rect x="77.9" y="30.1" width="26.19999999999999" height="26.299999999999997" fill="#a9abaa"/><rect x="104.1" y="30.1" width="3.9000000000000057" height="26.299999999999997" fill="#aaaaa9"/><rect x="0" y="56.4" width="25.4" height="26.199999999999996" fill="#aaaaa9"/><rect x="25.4" y="56.4" width="26.200000000000003" height="26.199999999999996" fill="#aaaba8"/><rect x="51.6" y="56.4" width="26.300000000000004" height="26.199999999999996" fill="#a9aaaa"/><rect x="77.9" y="56.4" width="26.19999999999999" height="26.199999999999996" fill="#aaaaa8"/><rect x="104.1" y="56.4" width="3.9000000000000057" height="26.199999999999996" fill="#aaaaa9"/><rect x="0" y="82.6" width="25.4" height="25.400000000000006" fill="#aaaaa9"/><rect x="25.4" y="82.6" width="26.200000000000003" height="25.400000000000006" fill="#aaaaa9"/><rect x="51.6" y="82.6" width="26.300000000000004" height="25.400000000000006" fill="#aaaaa9"/><rect x="77.9" y="82.6" width="26.19999999999999" height="25.400000000000006" fill="#aaaaa9"/><rect x="104.1" y="82.6" width="3.9000000000000057" height="25.400000000000006" fill="#aaaaa9"/><path d="M25.40 0V107.9M51.60 0V107.9M77.90 0V107.9M104.10 0V107.9M0 4.20H108M0 30.10H108M0 56.40H108M0 82.60H108" stroke="#c2c3c1" stroke-width="0.6" fill="none" opacity="1"/></svg></div><div class="tile" style="left:627.8px;top:318.8px"><svg width="108" height="107.9" viewBox="0 0 108 107.9" style="left:0;top:0"><rect width="108" height="107.9" fill="#7b7c80"/><rect x="0" y="-22" width="25.4" height="26.2" fill="#7b7c80"/><rect x="25.4" y="-22" width="26.200000000000003" height="26.2" fill="#7c7d81"/><rect x="51.6" y="-22" width="26.300000000000004" height="26.2" fill="#7a7b7f"/><rect x="77.9" y="-22" width="26.19999999999999" height="26.2" fill="#7b7c80"/><rect x="104.1" y="-22" width="3.9000000000000057" height="26.2" fill="#7c7d81"/><rect x="0" y="4.2" width="25.4" height="25.900000000000002" fill="#7a7b7f"/><rect x="25.4" y="4.2" width="26.200000000000003" height="25.900000000000002" fill="#7b7c80"/><rect x="51.6" y="4.2" width="26.300000000000004" height="25.900000000000002" fill="#7c7d81"/><rect x="77.9" y="4.2" width="26.19999999999999" height="25.900000000000002" fill="#7a7b7f"/><rect x="104.1" y="4.2" width="3.9000000000000057" height="25.900000000000002" fill="#7b7c80"/><rect x="0" y="30.1" width="25.4" height="26.299999999999997" fill="#7c7d81"/><rect x="25.4" y="30.1" width="26.200000000000003" height="26.299999999999997" fill="#7a7b7f"/><rect x="51.6" y="30.1" width="26.300000000000004" height="26.299999999999997" fill="#7b7c80"/><rect x="77.9" y="30.1" width="26.19999999999999" height="26.299999999999997" fill="#7c7d81"/><rect x="104.1" y="30.1" width="3.9000000000000057" height="26.299999999999997" fill="#7a7b7f"/><rect x="0" y="56.4" width="25.4" height="26.199999999999996" fill="#7b7c80"/><rect x="25.4" y="56.4" width="26.200000000000003" height="26.199999999999996" fill="#7c7d81"/><rect x="51.6" y="56.4" width="26.300000000000004" height="26.199999999999996" fill="#7a7b7f"/><rect x="77.9" y="56.4" width="26.19999999999999" height="26.199999999999996" fill="#7b7c80"/><rect x="104.1" y="56.4" width="3.9000000000000057" height="26.199999999999996" fill="#7c7d81"/><rect x="0" y="82.6" width="25.4" height="25.400000000000006" fill="#7a7b7f"/><rect x="25.4" y="82.6" width="26.200000000000003" height="25.400000000000006" fill="#7b7c80"/><rect x="51.6" y="82.6" width="26.300000000000004" height="25.400000000000006" fill="#7c7d81"/><rect x="77.9" y="82.6" width="26.19999999999999" height="25.400000000000006" fill="#7a7b7f"/><rect x="104.1" y="82.6" width="3.9000000000000057" height="25.400000000000006" fill="#7b7c80"/><path d="M25.40 0V107.9M51.60 0V107.9M77.90 0V107.9M104.10 0V107.9M0 4.20H108M0 30.10H108M0 56.40H108M0 82.60H108" stroke="#9d9ea1" stroke-width="0.6" fill="none" opacity="1"/></svg></div></div>
<span class="t" id="t0" style="left:5.0px;top:5.15px;font-size:7.5px;font-weight:400;color:#000;transform:scaleX(0.8521);-webkit-text-stroke:.15px #000;">Import Mosa Pattern</span>
<span class="t" id="t1" style="left:5.0px;top:22.29px;font-size:9.7px;font-weight:400;color:#000;transform:scaleX(0.8810);">Search for a pattern to import, and click to select it. Click Import to customize the pattern and download it into Vectorworks.</span>
<span class="t" id="t2" style="left:79.0px;top:41.29px;font-size:9.7px;font-weight:400;color:#0a0a0a;transform:scaleX(0.8878);">https://generator-alt.mosatest.com/app/?#search</span>
<span class="t" id="t3" style="left:25.8px;top:67.82px;font-size:13.8px;font-weight:700;color:#111;transform:scaleX(0.9231);">Mosa.</span>
<span class="t" id="t4" style="left:417.2px;top:71.07px;font-size:7.6px;font-weight:400;color:#666;transform:scaleX(0.9449);">Mosa.com</span>
<span class="t" id="t5" style="left:478.6px;top:71.07px;font-size:7.6px;font-weight:700;color:#222;transform:scaleX(0.8923);">Instruction video</span>
<span class="t" id="t6" style="left:560.5px;top:71.07px;font-size:7.6px;font-weight:700;color:#222;transform:scaleX(0.8787);">Report</span>
<span class="t" id="t7" style="left:606.0px;top:71.07px;font-size:7.6px;font-weight:400;color:#777;transform:scaleX(0.9664);">Help</span>
<span class="t" id="t8" style="left:647.5px;top:71.07px;font-size:7.6px;font-weight:400;color:#707070;transform:scaleX(0.9871);">Settings</span>
<span class="t" id="t9" style="left:705.7px;top:71.07px;font-size:7.6px;font-weight:400;color:#6a6a6a;transform:scaleX(0.9477);">My Mosa</span>
<span class="t" id="t10" style="left:25.8px;top:102.56px;font-size:8.2px;font-weight:700;color:#222;transform:scaleX(0.9034);">Pattern Generator</span>
<span class="t" id="t11" style="left:146.9px;top:102.47px;font-size:8.3px;font-weight:400;color:#222;transform:scaleX(0.8657);">Found 583 patterns</span>
<span class="t" id="t12" style="left:677.0px;top:102.73px;font-size:8.0px;font-weight:700;color:#222;transform:scaleX(0.8586);">Range of patterns</span>
<span class="t" id="t13" style="left:25.5px;top:132.07px;font-size:7.6px;font-weight:700;color:#222;transform:scaleX(0.8904);">Select application</span>
<span class="t" id="t14" style="left:35.7px;top:144.56px;font-size:8.2px;font-weight:700;color:#333;transform:scaleX(0.7963);">Floor</span>
<span class="t" id="t15" style="left:35.7px;top:160.56px;font-size:8.2px;font-weight:700;color:#333;transform:scaleX(0.8650);">Wall</span>
<span class="t" id="t16" style="left:25.8px;top:174.84px;font-size:5.5px;font-weight:400;color:#cfcfcf;transform:scaleX(0.9068);">Surface</span>
<span class="t" id="t17" style="left:23.0px;top:184.56px;font-size:8.2px;font-weight:400;color:#b4b4b4;transform:scaleX(0.8741);">All surfaces</span>
<span class="t" id="t18" style="left:25.8px;top:201.84px;font-size:5.5px;font-weight:400;color:#cfcfcf;transform:scaleX(0.8177);">Sizes</span>
<span class="t" id="t19" style="left:23.0px;top:211.56px;font-size:8.2px;font-weight:400;color:#b4b4b4;transform:scaleX(0.8591);">All sizes</span>
<span class="t" id="t20" style="left:36.8px;top:228.84px;font-size:5.5px;font-weight:400;color:#d4d4d4;transform:scaleX(0.8824);">All sizes</span>
<span class="t" id="t21" style="left:34.0px;top:238.56px;font-size:8.2px;font-weight:400;color:#b4b4b4;transform:scaleX(0.8458);">All sizes</span>
<span class="t" id="t22" style="left:25.8px;top:255.84px;font-size:5.5px;font-weight:400;color:#cfcfcf;transform:scaleX(0.9273);">Color</span>
<span class="t" id="t23" style="left:23.0px;top:265.56px;font-size:8.2px;font-weight:400;color:#b4b4b4;transform:scaleX(0.8820);">All colors</span>
<span class="t" id="t24" style="left:25.8px;top:282.84px;font-size:5.5px;font-weight:400;color:#cfcfcf;transform:scaleX(0.9580);">Color combinations</span>
<span class="t" id="t25" style="left:23.0px;top:291.56px;font-size:8.2px;font-weight:400;color:#b4b4b4;transform:scaleX(0.9129);">All color combinations</span>
<span class="t" id="t26" style="left:25.8px;top:309.84px;font-size:5.5px;font-weight:400;color:#cfcfcf;transform:scaleX(0.8720);">Serie</span>
<span class="t" id="t27" style="left:23.0px;top:319.56px;font-size:8.2px;font-weight:400;color:#b4b4b4;transform:scaleX(0.8730);">All series</span>
<span class="t" id="t28" style="left:25.5px;top:344.73px;font-size:8.0px;font-weight:400;color:#b5b5b5;transform:scaleX(0.8962);">All grids</span>
<span class="t" id="t29" style="left:25.5px;top:377.90px;font-size:7.8px;font-weight:700;color:#222;transform:scaleX(0.8258);">Search by code</span>
<span class="t" id="t30" style="left:75.1px;top:379.76px;font-size:5.6px;font-weight:700;color:#333;transform:scaleX(0.8781);">(PT, TS, BS, etc)</span>
<span class="t" id="t31" style="left:102.8px;top:426.90px;font-size:7.8px;font-weight:700;color:#333;transform:scaleX(0.8141);">Reset</span>
<span class="t" id="t32" style="left:669.7px;top:453.15px;font-size:7.5px;font-weight:400;color:#111;transform:scaleX(0.7336);">Import</span>
<span class="t" id="t33" style="left:729.2px;top:453.15px;font-size:7.5px;font-weight:400;color:#111;transform:scaleX(0.7088);">Close</span>
<span class="t" id="t34" style="left:147.1px;top:245.24px;font-size:7.4px;font-weight:700;color:#222;transform:scaleX(0.9579);">PT9004</span>
<span class="t" id="t35" style="left:268.5px;top:245.24px;font-size:7.4px;font-weight:700;color:#222;transform:scaleX(0.9540);">PT9003</span>
<span class="t" id="t36" style="left:389.9px;top:245.24px;font-size:7.4px;font-weight:700;color:#222;transform:scaleX(0.9154);">PT9001</span>
<span class="t" id="t37" style="left:511.2px;top:245.24px;font-size:7.4px;font-weight:700;color:#222;transform:scaleX(0.8999);">PT3544</span>
<span class="t" id="t38" style="left:632.7px;top:245.24px;font-size:7.4px;font-weight:700;color:#222;transform:scaleX(0.9926);">PT9000</span>
<span class="t" id="t39" style="left:147.1px;top:369.24px;font-size:7.4px;font-weight:700;color:#222;transform:scaleX(0.8613);">PT3543</span>
<span class="t" id="t40" style="left:268.5px;top:369.24px;font-size:7.4px;font-weight:700;color:#222;transform:scaleX(0.8729);">PT3542</span>
<span class="t" id="t41" style="left:389.9px;top:369.24px;font-size:7.4px;font-weight:700;color:#222;transform:scaleX(0.8266);">PT3541</span>
<span class="t" id="t42" style="left:511.2px;top:369.24px;font-size:7.4px;font-weight:700;color:#222;transform:scaleX(0.9154);">PT3540</span>
<span class="t" id="t43" style="left:632.7px;top:369.24px;font-size:7.4px;font-weight:700;color:#222;transform:scaleX(0.8884);">PT3539</span>
</body></html>
